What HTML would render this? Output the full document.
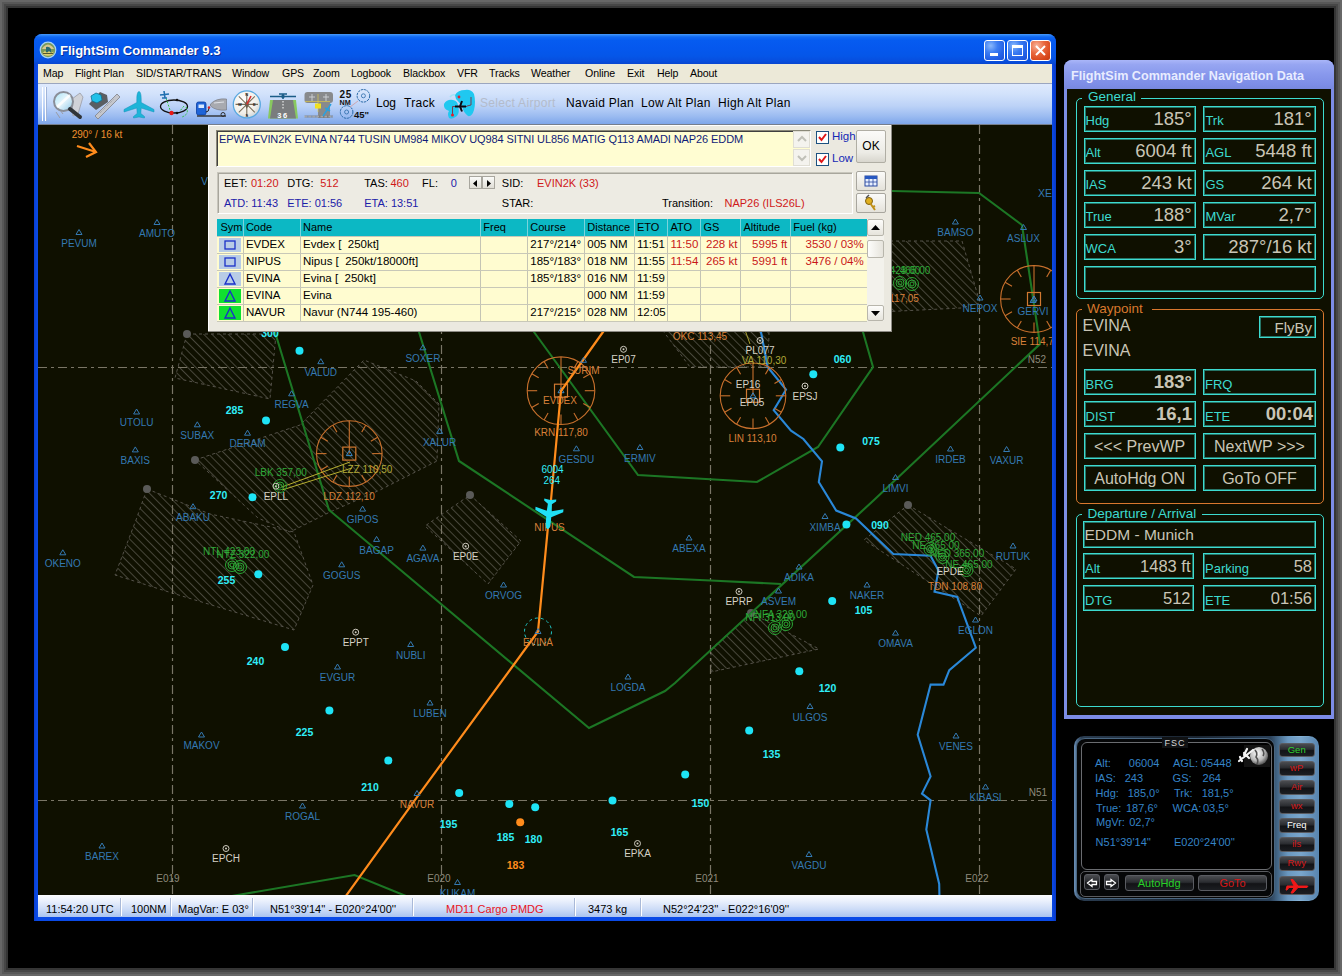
<!DOCTYPE html>
<html><head><meta charset="utf-8">
<style>
*{margin:0;padding:0;box-sizing:border-box}
html,body{width:1342px;height:976px;overflow:hidden;background:#000;font-family:"Liberation Sans",sans-serif}
#frame{position:absolute;left:0;top:0;width:1342px;height:976px;background:#000;box-shadow:inset 0 0 0 2px #676767,inset 0 0 0 4px #585858,inset 0 0 0 6px #474747,inset 0 0 0 8px #353535}
#blk{display:none}
#mw{position:absolute;left:34px;top:34px;width:1022px;height:887px;background:linear-gradient(90deg,#0a3ed0,#0a4ae6 3px,#0a4ae6 1018px,#0838c8);border-radius:8px 8px 0 0}
#mwtitle{position:absolute;left:0;top:0;width:1022px;height:30px;border-radius:8px 8px 0 0;
 background:linear-gradient(#4d9cfa 0px,#3088f8 1px,#1068f2 3px,#065cf0 6px,#0558ee 14px,#0556e8 22px,#074ede 27px,#0846d0 30px)}
#mwtitle .t{position:absolute;left:26px;top:9px;color:#fff;font-weight:bold;font-size:13px;letter-spacing:0px;text-shadow:1px 1px 0 #0b2c94}
.xpb{position:absolute;top:6px;width:21px;height:21px;border:1px solid #fff;border-radius:3px;background:radial-gradient(circle at 30% 25%,#8ab8fb 0%,#3e7ef2 35%,#2360e6 70%,#1d50d4 100%)}
#menubar{position:absolute;left:4px;top:30px;width:1014px;height:20px;background:#ece9d8;border-bottom:1px solid #9ba6bf;font-size:10.6px;letter-spacing:-0.1px;color:#000}
#menubar span{position:absolute;top:3px;white-space:nowrap}
#toolbar{position:absolute;left:4px;top:50px;width:1014px;height:41px;background:linear-gradient(#dfeafd 0%,#d2e2fb 25%,#bcd2f7 55%,#9cbcf1 80%,#7ea6ea 100%);border-bottom:1px solid #767e8c}
#toolbar .tx{position:absolute;top:12px;font-size:12px;color:#000;letter-spacing:0.3px;white-space:nowrap}
#map{position:absolute;left:4px;top:91px;width:1014px;height:770px;background:#0f1000;overflow:hidden}
#status{position:absolute;left:4px;top:861px;width:1014px;height:22px;background:linear-gradient(#fbfcfe 0%,#e8effc 30%,#c8d9f6 70%,#a9c3f0 100%);font-size:11px;color:#000}
#status span{position:absolute;top:7.5px;white-space:nowrap}
.sep{position:absolute;top:3px;width:2px;height:18px;border-left:1px solid #a9b9d8;border-right:1px solid #fff}
#nw{position:absolute;left:1064px;top:60px;width:270px;height:659px;background:#7c8ce6;border-radius:8px 8px 0 0}
#nwtitle{position:absolute;left:0;top:0;width:270px;height:29px;border-radius:8px 8px 0 0;background:linear-gradient(#aab6f8 0%,#97a6f2 15%,#8898ec 50%,#7d8de6 85%,#7888de 100%)}
#nwtitle .t{position:absolute;left:7px;top:9px;color:#e8ecff;font-weight:bold;font-size:12.6px;white-space:nowrap}
#nwbody{position:absolute;left:3px;top:29px;width:264px;height:626px;background:#0f1000}
</style></head><body>
<div id="frame"></div>
<div id="blk"></div>

<div id="mw">
 <div id="mwtitle">
  <svg style="position:absolute;left:5px;top:7px" width="18" height="18" viewBox="0 0 18 18"><circle cx="9" cy="9" r="7.8" fill="#7a9a5a" stroke="#a8d4f4" stroke-width="1.2"/><path d="M3,8 Q5,4 9,3.5 Q13,4 15,8Z" fill="#d8c890"/><path d="M7,6 Q10,5 12,8 L12,11 L7,11Z" fill="#2a6a70"/><path d="M3.5,12 L6,10 L8,12 L10,10 L12,12 L14.5,10.5 L14,13.5 Q9,16 4,13.5Z" fill="#e0d070"/><path d="M4,12.5 L14,12.5" stroke="#303820" stroke-width="0.8"/></svg>
  <div class="t">FlightSim Commander 9.3</div>
  <div class="xpb" style="left:950px"><div style="position:absolute;left:5px;top:12px;width:8px;height:3px;background:#fff"></div></div>
  <div class="xpb" style="left:973px"><div style="position:absolute;left:4px;top:4px;width:11px;height:11px;border:1px solid #fff;border-top-width:3px"></div></div>
  <div class="xpb" style="left:996px;background:radial-gradient(circle at 30% 25%,#f7b39a 0%,#e9683f 40%,#d9481c 75%,#c23a12 100%)">
   <svg style="position:absolute;left:3px;top:3px" width="13" height="13"><path d="M2 2 L11 11 M11 2 L2 11" stroke="#fff" stroke-width="2"/></svg></div>
 </div>
 <div id="menubar">
  <span style="left:5px">Map</span><span style="left:37px">Flight Plan</span><span style="left:98px">SID/STAR/TRANS</span><span style="left:194px">Window</span><span style="left:244px">GPS</span><span style="left:275px">Zoom</span><span style="left:313px">Logbook</span><span style="left:365px">Blackbox</span><span style="left:419px">VFR</span><span style="left:451px">Tracks</span><span style="left:493px">Weather</span><span style="left:547px">Online</span><span style="left:589px">Exit</span><span style="left:619px">Help</span><span style="left:652px">About</span>
 </div>
 <div id="toolbar"><svg style="position:absolute;left:0px;top:0px" width="450" height="41" viewBox="38 84 450 41" font-family="Liberation Sans">
<defs><linearGradient id="gl" x1="0" y1="0" x2="1" y2="1"><stop offset="0" stop-color="#a8e4f8"/><stop offset="0.5" stop-color="#e8f6fc"/><stop offset="1" stop-color="#8cc8e8"/></linearGradient><radialGradient id="cg" cx="0.4" cy="0.35" r="0.7"><stop offset="0" stop-color="#ffffff"/><stop offset="0.7" stop-color="#f0eee8"/><stop offset="1" stop-color="#c8d0d8"/></radialGradient></defs>
<g><path d="M72,99 L80,93 L83,97 L78,114 L73,116Z" fill="#d0d2d8" stroke="#9a9ca4" stroke-width="0.8"/><path d="M56,112 L60,118 M60,110 L63,114" stroke="#9a9ca4" stroke-width="1"/><circle cx="63.5" cy="101.5" r="9.5" fill="url(#gl)" stroke="#8a8e98" stroke-width="2"/><path d="M57,107 L70,95" stroke="#ffffff" stroke-width="2.5" opacity="0.8"/><path d="M70,109 L80,117" stroke="#303438" stroke-width="4" stroke-linecap="round"/></g>
<g><path d="M95,116 L117,94 L120,97 L98,119Z" fill="#c4c6cc" stroke="#808288" stroke-width="0.8"/><path d="M100,113 L114,99" stroke="#808288" stroke-width="0.6" stroke-dasharray="1,1"/><path d="M89,104 L100,92 L107,95 L108,102 L96,110Z" fill="#5a5e62"/><polygon points="96,93 101,95 102,100 97,103 92,101 91,96" fill="#20c0e8" stroke="#107090" stroke-width="0.8"/></g>
<g transform="translate(139,104.5)"><path d="M0,-13 C1.6,-13 2.2,-9 2.2,-6 L2.2,-2 L15,5 L15,7.5 L2.2,3.5 L1.8,9 L5.5,12 L5.5,13.5 L0,12.5 L-5.5,13.5 L-5.5,12 L-1.8,9 L-2.2,3.5 L-15,7.5 L-15,5 L-2.2,-2 L-2.2,-6 C-2.2,-9 -1.6,-13 0,-13Z" fill="#1eb4d8" stroke="#1090b8" stroke-width="0.5"/></g>
<g><ellipse cx="174" cy="106.5" rx="13.5" ry="6.5" fill="none" stroke="#101010" stroke-width="1.3"/><circle cx="171.5" cy="113" r="2.2" fill="#e81818"/><circle cx="177" cy="113" r="1.3" fill="#101010"/><circle cx="177" cy="100" r="1.3" fill="#101010"/><path d="M166,98 L170,110 M184,106 L180,111 M186,107 Q190,114 182,117" fill="none" stroke="#30c040" stroke-width="1" stroke-dasharray="2,1.5"/><path d="M164,91 L165,98 M160,95 L169,94 M162,98 L167,98" stroke="#2070b0" stroke-width="1.6"/></g>
<g><rect x="196.5" y="102" width="9.5" height="13" rx="2" fill="#1f64d8" stroke="#0a3ca0" stroke-width="0.8"/><rect x="198.5" y="104.5" width="5.5" height="3.5" fill="#d8e8ff"/><path d="M206,112 Q209,112 209,108" fill="none" stroke="#202020" stroke-width="1"/><circle cx="209" cy="107.5" r="1.2" fill="#e02020"/><path d="M210.5,104 Q216,98 226.5,99 L226.5,110 Q216,111 210.5,106Z" fill="#a8aab0" stroke="#707278" stroke-width="0.6"/><path d="M214,103 L224,102" stroke="#e0e2e8" stroke-width="1.2"/><path d="M197,116 L226,116" stroke="#303030" stroke-width="1.4"/><circle cx="223" cy="114.5" r="2" fill="none" stroke="#303030" stroke-width="1"/></g>
<g><circle cx="246.8" cy="104.4" r="13.5" fill="url(#cg)" stroke="#58a8e0" stroke-width="1.3"/><path d="M246.8,93 L246.8,116 M235.5,104.4 L258,104.4 M238.8,96.4 L254.8,112.4 M254.8,96.4 L238.8,112.4" stroke="#7a6e5a" stroke-width="1.1"/><path d="M246.8,100 L249,104.4 L246.8,108.8 L244.6,104.4Z" fill="#6a6050"/><path d="M251,96 L246.8,104.4" stroke="#d83030" stroke-width="1.6"/><text x="246.8" y="95.5" font-size="4" text-anchor="middle" fill="#202020" font-weight="bold">N</text><text x="238" y="106" font-size="4" fill="#202020" font-weight="bold">W</text><text x="253" y="106" font-size="4" fill="#202020" font-weight="bold">E</text><text x="245.5" y="117" font-size="4" fill="#202020" font-weight="bold">S</text></g>
<g><path d="M270,100 L296,100 L298,118.5 L268,118.5Z" fill="#88c860"/><path d="M273,100 L293,100 L296,118.5 L270,118.5Z" fill="#7a7c7e"/><path d="M283,101 L283,109" stroke="#fff" stroke-width="1" stroke-dasharray="1.5,1.5"/><text x="283" y="117.5" font-size="7.5" text-anchor="middle" fill="#fff" font-weight="bold" letter-spacing="1.5">36</text><path d="M270,96.5 L296,96.5 M283,94 L283,99 M279,94 L287,94" stroke="#1a5c88" stroke-width="1.5"/><circle cx="283" cy="96.5" r="1.8" fill="#1a5c88"/></g>
<g><rect x="304.5" y="92" width="28.5" height="11" rx="3" fill="#888a8c"/><rect x="318" y="99" width="12" height="19" fill="#888a8c"/><path d="M312,94 L312,101 M309,97 L315,97 M326,94 L326,101 M323,97 L329,97" stroke="#d0d4d8" stroke-width="0.9"/><path d="M318,94 L318,112 M305,101.5 L330,101.5" stroke="#e8d040" stroke-width="0.6"/><rect x="315" y="103.5" width="6" height="5" fill="#f0e020"/><path d="M304.5,116.5 L333,116.5" stroke="#d8dadc" stroke-width="1.3" stroke-dasharray="2.5,1.5"/><path d="M304.5,116.5 L333,116.5" stroke="#707274" stroke-width="2.5" opacity="0.5"/><path d="M323,116 L331,104 M325,108 L330,111" stroke="#28a0e0" stroke-width="1.5"/></g>
<g><text x="339.5" y="97.5" font-size="10" font-weight="bold" fill="#101010" letter-spacing="0.8">25</text><text x="339.5" y="104.5" font-size="7.2" font-weight="bold" fill="#101010">NM</text><text x="354" y="117.5" font-size="9.5" font-weight="bold" fill="#101010">45"</text><circle cx="363.4" cy="95.8" r="6.3" fill="none" stroke="#2a6aa8" stroke-width="1" stroke-dasharray="2.5,0.8"/><circle cx="363.4" cy="95.8" r="2" fill="none" stroke="#2a6aa8" stroke-width="0.8"/><circle cx="346.6" cy="112" r="6.3" fill="none" stroke="#2a6aa8" stroke-width="1" stroke-dasharray="2.5,0.8"/><circle cx="346.6" cy="112" r="2" fill="none" stroke="#2a6aa8" stroke-width="0.8"/><path d="M350,107 L358,101" stroke="#d09090" stroke-width="0.7"/></g>
<g><path d="M444,104 Q447,99 453,100 Q458,101 458,106 Q460,112 457,116 Q452,120 449,118 Q447,114 449,111 Q443,109 444,104Z" fill="#20c8f0"/><path d="M455,95 Q458,90 465,90 Q471,89 474,94 Q476,102 474,110 Q472,117 468,116 Q463,112 462,106 Q458,101 456,99Z" fill="#20c8f0"/><path d="M450,97 Q452,94 455,95" stroke="#a0e4f8" stroke-width="1.5" fill="none"/><path d="M452.5,115 L452.5,106.5 L467,106.5 M471,97 L471,105 L467,106" fill="none" stroke="#803040" stroke-width="0.9"/><circle cx="452.5" cy="115" r="1.5" fill="#e02030"/><circle cx="459" cy="97" r="1.4" fill="#e02030"/><path d="M455,106.5 L466,106.5 M462,101 L460,106.5 L462,111.5" stroke="#0a0a10" stroke-width="2" fill="none"/></g>
</svg>
  <div style="position:absolute;left:4px;top:3px;width:4px;height:34px;border-left:1px solid #fff;border-right:1px solid #fff;box-shadow:1px 0 0 #a0b4d8"></div>
  <span class="tx" style="left:338px;letter-spacing:0">Log</span>
  <span class="tx" style="left:366px">Track</span>
  <span class="tx" style="left:442px;color:#b4bccb">Select Airport</span>
  <span class="tx" style="left:528px">Navaid Plan</span>
  <span class="tx" style="left:603px">Low Alt Plan</span>
  <span class="tx" style="left:680px">High Alt Plan</span>
 </div>
 <div id="map"><svg style="position:absolute;left:0;top:0" width="1014" height="770" viewBox="38 125 1014 770" font-family="Liberation Sans">
<defs><pattern id="hp" patternUnits="userSpaceOnUse" width="5.8" height="5.8" patternTransform="rotate(-45)"><line x1="0.5" y1="0" x2="0.5" y2="5.8" stroke="#4e4c42" stroke-width="0.9"/></pattern></defs>
<rect x="38" y="125" width="1014" height="770" fill="#0f1000"/>
<polygon points="187.0,334.0 276.0,334.0 270.0,399.0 175.0,378.0" fill="url(#hp)" stroke="#55524a" stroke-width="1" stroke-dasharray="3,3"/>
<polygon points="195.0,460.0 300.0,425.0 364.0,360.0 416.0,381.0 439.0,404.0 437.0,461.0 380.0,490.0 330.0,512.0 290.0,532.0 258.0,518.0" fill="url(#hp)" stroke="#55524a" stroke-width="1" stroke-dasharray="3,3"/>
<polygon points="147.0,489.0 210.0,514.0 294.0,532.0 313.0,585.0 294.0,630.0 172.0,593.0 115.0,575.0 136.0,520.0" fill="url(#hp)" stroke="#55524a" stroke-width="1" stroke-dasharray="3,3"/>
<polygon points="470.0,495.0 521.0,541.0 488.0,584.0 425.0,526.0" fill="url(#hp)" stroke="#55524a" stroke-width="1" stroke-dasharray="3,3"/>
<polygon points="908.0,505.0 1016.0,569.0 981.0,616.0 864.0,540.0" fill="url(#hp)" stroke="#55524a" stroke-width="1" stroke-dasharray="3,3"/>
<polygon points="751.0,613.0 819.0,649.0 711.0,672.0 711.0,649.0" fill="url(#hp)" stroke="#55524a" stroke-width="1" stroke-dasharray="3,3"/>
<polygon points="860.0,241.0 962.0,241.0 980.0,303.0 961.0,308.0 860.0,313.0" fill="url(#hp)" stroke="#55524a" stroke-width="1" stroke-dasharray="3,3"/>
<polygon points="640.0,300.0 770.0,300.0 768.0,367.0 690.0,367.0" fill="url(#hp)" stroke="#55524a" stroke-width="1" stroke-dasharray="3,3"/>
<line x1="172.5" y1="125" x2="172.5" y2="895" stroke="#7a7666" stroke-width="1.2" stroke-dasharray="9,4,3,4"/>
<line x1="441.5" y1="125" x2="441.5" y2="895" stroke="#7a7666" stroke-width="1.2" stroke-dasharray="9,4,3,4"/>
<line x1="710.5" y1="125" x2="710.5" y2="895" stroke="#7a7666" stroke-width="1.2" stroke-dasharray="9,4,3,4"/>
<line x1="979.5" y1="125" x2="979.5" y2="895" stroke="#7a7666" stroke-width="1.2" stroke-dasharray="9,4,3,4"/>
<line x1="38" y1="367.5" x2="1052" y2="367.5" stroke="#7a7666" stroke-width="1.2" stroke-dasharray="9,4,3,4"/>
<line x1="38" y1="800.5" x2="1052" y2="800.5" stroke="#7a7666" stroke-width="1.2" stroke-dasharray="9,4,3,4"/>
<text x="168.0" y="882.1" fill="#8e8a7c" font-size="10" font-weight="normal" text-anchor="middle" >E019</text>
<text x="439.0" y="882.1" fill="#8e8a7c" font-size="10" font-weight="normal" text-anchor="middle" >E020</text>
<text x="707.0" y="882.1" fill="#8e8a7c" font-size="10" font-weight="normal" text-anchor="middle" >E021</text>
<text x="977.0" y="882.1" fill="#8e8a7c" font-size="10" font-weight="normal" text-anchor="middle" >E022</text>
<text x="1037.0" y="363.1" fill="#8e8a7c" font-size="10" font-weight="normal" text-anchor="middle" >N52</text>
<text x="1038.0" y="796.1" fill="#8e8a7c" font-size="10" font-weight="normal" text-anchor="middle" >N51</text>
<circle cx="187" cy="334" r="4" fill="#5a5a58"/>
<circle cx="195" cy="460" r="4" fill="#5a5a58"/>
<circle cx="147" cy="489" r="4" fill="#5a5a58"/>
<circle cx="470" cy="495" r="4" fill="#5a5a58"/>
<circle cx="908" cy="505" r="4" fill="#5a5a58"/>
<circle cx="751" cy="613" r="4" fill="#5a5a58"/>
<polyline points="892.0,191.0 979.0,193.0 1022.0,225.0 1040.0,344.0 874.0,500.0 675.0,683.0 665.0,691.0 589.0,728.0 329.0,510.0 275.0,332.0 262.0,290.0" fill="none" stroke="#1c7624" stroke-width="2.1"/>
<polyline points="405.0,290.0 419.0,332.0 459.0,461.0 634.0,577.0 710.7,580.5 781.0,584.0" fill="none" stroke="#1c7624" stroke-width="2.1"/>
<polyline points="505.0,290.0 534.0,332.0 638.0,475.0 757.0,482.0 818.0,447.0 873.0,367.0 863.0,332.0 850.0,300.0" fill="none" stroke="#1c7624" stroke-width="2.1"/>
<polyline points="232.0,896.0 354.5,875.0 406.0,896.0" fill="none" stroke="#1c7624" stroke-width="2.1"/>
<polyline points="755.0,300.0 761.0,332.0 767.6,367.0 786.0,389.7 773.7,410.2 791.0,430.7 803.4,439.0 822.0,461.4 818.8,482.0 836.2,510.6 856.0,518.5 893.3,554.0 930.5,555.8 938.5,570.4 934.5,591.7 957.2,597.0 975.8,647.7 949.3,670.2 943.5,684.6 930.6,684.6 917.7,734.8 930.6,776.4 922.0,793.6 930.6,800.3 926.3,829.5 939.2,884.0 939.5,900.0" fill="none" stroke="#2a88d8" stroke-width="2.1"/>
<circle cx="349.3" cy="453.6" r="32.8" fill="none" stroke="#c8702c" stroke-width="1.1"/>
<line x1="349.3" y1="420.8" x2="349.3" y2="453.6" stroke="#c8702c" stroke-width="1.1"/>
<line x1="365.7" y1="425.2" x2="361.7" y2="432.1" stroke="#c8702c" stroke-width="1.1"/>
<line x1="377.7" y1="437.2" x2="370.8" y2="441.2" stroke="#c8702c" stroke-width="1.1"/>
<line x1="382.1" y1="453.6" x2="372.1" y2="453.6" stroke="#c8702c" stroke-width="1.1"/>
<line x1="377.7" y1="470.0" x2="370.8" y2="466.0" stroke="#c8702c" stroke-width="1.1"/>
<line x1="365.7" y1="482.0" x2="361.7" y2="475.1" stroke="#c8702c" stroke-width="1.1"/>
<line x1="349.3" y1="486.4" x2="349.3" y2="476.4" stroke="#c8702c" stroke-width="1.1"/>
<line x1="332.9" y1="482.0" x2="336.9" y2="475.1" stroke="#c8702c" stroke-width="1.1"/>
<line x1="320.9" y1="470.0" x2="327.8" y2="466.0" stroke="#c8702c" stroke-width="1.1"/>
<line x1="316.5" y1="453.6" x2="326.5" y2="453.6" stroke="#c8702c" stroke-width="1.1"/>
<line x1="320.9" y1="437.2" x2="327.8" y2="441.2" stroke="#c8702c" stroke-width="1.1"/>
<line x1="332.9" y1="425.2" x2="336.9" y2="432.1" stroke="#c8702c" stroke-width="1.1"/>
<rect x="342.8" y="447.1" width="13" height="13" fill="none" stroke="#d07830" stroke-width="1.2"/>
<path d="M346.3,455.6 L349.3,450.6 L352.3,455.6Z" fill="none" stroke="#3a88c8" stroke-width="1"/>
<circle cx="561" cy="390.7" r="33.8" fill="none" stroke="#c8702c" stroke-width="1.1"/>
<line x1="561.0" y1="356.9" x2="561.0" y2="390.7" stroke="#c8702c" stroke-width="1.1"/>
<line x1="577.9" y1="361.4" x2="573.9" y2="368.4" stroke="#c8702c" stroke-width="1.1"/>
<line x1="590.3" y1="373.8" x2="583.3" y2="377.8" stroke="#c8702c" stroke-width="1.1"/>
<line x1="594.8" y1="390.7" x2="584.8" y2="390.7" stroke="#c8702c" stroke-width="1.1"/>
<line x1="590.3" y1="407.6" x2="583.3" y2="403.6" stroke="#c8702c" stroke-width="1.1"/>
<line x1="577.9" y1="420.0" x2="573.9" y2="413.0" stroke="#c8702c" stroke-width="1.1"/>
<line x1="561.0" y1="424.5" x2="561.0" y2="414.5" stroke="#c8702c" stroke-width="1.1"/>
<line x1="544.1" y1="420.0" x2="548.1" y2="413.0" stroke="#c8702c" stroke-width="1.1"/>
<line x1="531.7" y1="407.6" x2="538.7" y2="403.6" stroke="#c8702c" stroke-width="1.1"/>
<line x1="527.2" y1="390.7" x2="537.2" y2="390.7" stroke="#c8702c" stroke-width="1.1"/>
<line x1="531.7" y1="373.8" x2="538.7" y2="377.8" stroke="#c8702c" stroke-width="1.1"/>
<line x1="544.1" y1="361.4" x2="548.1" y2="368.4" stroke="#c8702c" stroke-width="1.1"/>
<rect x="554.5" y="384.2" width="13" height="13" fill="none" stroke="#d07830" stroke-width="1.2"/>
<path d="M558,392.7 L561,387.7 L564,392.7Z" fill="none" stroke="#3a88c8" stroke-width="1"/>
<circle cx="753" cy="395.8" r="32.8" fill="none" stroke="#c8702c" stroke-width="1.1"/>
<line x1="753.0" y1="363.0" x2="753.0" y2="395.8" stroke="#c8702c" stroke-width="1.1"/>
<line x1="769.4" y1="367.4" x2="765.4" y2="374.3" stroke="#c8702c" stroke-width="1.1"/>
<line x1="781.4" y1="379.4" x2="774.5" y2="383.4" stroke="#c8702c" stroke-width="1.1"/>
<line x1="785.8" y1="395.8" x2="775.8" y2="395.8" stroke="#c8702c" stroke-width="1.1"/>
<line x1="781.4" y1="412.2" x2="774.5" y2="408.2" stroke="#c8702c" stroke-width="1.1"/>
<line x1="769.4" y1="424.2" x2="765.4" y2="417.3" stroke="#c8702c" stroke-width="1.1"/>
<line x1="753.0" y1="428.6" x2="753.0" y2="418.6" stroke="#c8702c" stroke-width="1.1"/>
<line x1="736.6" y1="424.2" x2="740.6" y2="417.3" stroke="#c8702c" stroke-width="1.1"/>
<line x1="724.6" y1="412.2" x2="731.5" y2="408.2" stroke="#c8702c" stroke-width="1.1"/>
<line x1="720.2" y1="395.8" x2="730.2" y2="395.8" stroke="#c8702c" stroke-width="1.1"/>
<line x1="724.6" y1="379.4" x2="731.5" y2="383.4" stroke="#c8702c" stroke-width="1.1"/>
<line x1="736.6" y1="367.4" x2="740.6" y2="374.3" stroke="#c8702c" stroke-width="1.1"/>
<rect x="746.5" y="389.3" width="13" height="13" fill="none" stroke="#d07830" stroke-width="1.2"/>
<path d="M750,397.8 L753,392.8 L756,397.8Z" fill="none" stroke="#3a88c8" stroke-width="1"/>
<circle cx="1034" cy="299" r="33.4" fill="none" stroke="#c8702c" stroke-width="1.1"/>
<line x1="1034.0" y1="265.6" x2="1034.0" y2="299.0" stroke="#c8702c" stroke-width="1.1"/>
<line x1="1050.7" y1="270.1" x2="1046.7" y2="277.0" stroke="#c8702c" stroke-width="1.1"/>
<line x1="1062.9" y1="282.3" x2="1056.0" y2="286.3" stroke="#c8702c" stroke-width="1.1"/>
<line x1="1067.4" y1="299.0" x2="1057.4" y2="299.0" stroke="#c8702c" stroke-width="1.1"/>
<line x1="1062.9" y1="315.7" x2="1056.0" y2="311.7" stroke="#c8702c" stroke-width="1.1"/>
<line x1="1050.7" y1="327.9" x2="1046.7" y2="321.0" stroke="#c8702c" stroke-width="1.1"/>
<line x1="1034.0" y1="332.4" x2="1034.0" y2="322.4" stroke="#c8702c" stroke-width="1.1"/>
<line x1="1017.3" y1="327.9" x2="1021.3" y2="321.0" stroke="#c8702c" stroke-width="1.1"/>
<line x1="1005.1" y1="315.7" x2="1012.0" y2="311.7" stroke="#c8702c" stroke-width="1.1"/>
<line x1="1000.6" y1="299.0" x2="1010.6" y2="299.0" stroke="#c8702c" stroke-width="1.1"/>
<line x1="1005.1" y1="282.3" x2="1012.0" y2="286.3" stroke="#c8702c" stroke-width="1.1"/>
<line x1="1017.3" y1="270.1" x2="1021.3" y2="277.0" stroke="#c8702c" stroke-width="1.1"/>
<rect x="1027.5" y="292.5" width="13" height="13" fill="none" stroke="#d07830" stroke-width="1.2"/>
<path d="M1031,301 L1034,296 L1037,301Z" fill="none" stroke="#3a88c8" stroke-width="1"/>
<polyline points="282,487 350,462" stroke="#b8b030" stroke-width="1" fill="none"/><polyline points="282,490 352,468" stroke="#b8b030" stroke-width="1" fill="none"/>
<polyline points="750,344 745,330" stroke="#a8a030" stroke-width="1" fill="none"/>
<polyline points="343.0,900.0 417.6,796.4 538.0,631.5 547.7,529.6 551.0,500.0 561.0,391.0 603.0,332.0 640.0,280.0" fill="none" stroke="#ff8c1c" stroke-width="2.2"/>
<circle cx="538" cy="631.5" r="13.5" fill="none" stroke="#20c8c8" stroke-width="1" stroke-dasharray="3,3"/>
<circle cx="280" cy="486" r="2" fill="none" stroke="#2aa634" stroke-width="1"/>
<circle cx="280" cy="486" r="4" fill="none" stroke="#2aa634" stroke-width="1"/>
<circle cx="280" cy="486" r="6.5" fill="none" stroke="#2aa634" stroke-width="1"/>
<circle cx="232" cy="565" r="2" fill="none" stroke="#2aa634" stroke-width="1"/>
<circle cx="232" cy="565" r="4" fill="none" stroke="#2aa634" stroke-width="1"/>
<circle cx="232" cy="565" r="6.5" fill="none" stroke="#2aa634" stroke-width="1"/>
<circle cx="240" cy="567" r="2" fill="none" stroke="#2aa634" stroke-width="1"/>
<circle cx="240" cy="567" r="4" fill="none" stroke="#2aa634" stroke-width="1"/>
<circle cx="240" cy="567" r="6.5" fill="none" stroke="#2aa634" stroke-width="1"/>
<circle cx="930.5" cy="549" r="2" fill="none" stroke="#2aa634" stroke-width="1"/>
<circle cx="930.5" cy="549" r="4" fill="none" stroke="#2aa634" stroke-width="1"/>
<circle cx="930.5" cy="549" r="6.5" fill="none" stroke="#2aa634" stroke-width="1"/>
<circle cx="942.5" cy="557" r="2" fill="none" stroke="#2aa634" stroke-width="1"/>
<circle cx="942.5" cy="557" r="4" fill="none" stroke="#2aa634" stroke-width="1"/>
<circle cx="942.5" cy="557" r="6.5" fill="none" stroke="#2aa634" stroke-width="1"/>
<circle cx="966.5" cy="570" r="2" fill="none" stroke="#2aa634" stroke-width="1"/>
<circle cx="966.5" cy="570" r="4" fill="none" stroke="#2aa634" stroke-width="1"/>
<circle cx="966.5" cy="570" r="6.5" fill="none" stroke="#2aa634" stroke-width="1"/>
<circle cx="775" cy="628" r="2" fill="none" stroke="#2aa634" stroke-width="1"/>
<circle cx="775" cy="628" r="4" fill="none" stroke="#2aa634" stroke-width="1"/>
<circle cx="775" cy="628" r="6.5" fill="none" stroke="#2aa634" stroke-width="1"/>
<circle cx="786" cy="624" r="2" fill="none" stroke="#2aa634" stroke-width="1"/>
<circle cx="786" cy="624" r="4" fill="none" stroke="#2aa634" stroke-width="1"/>
<circle cx="786" cy="624" r="6.5" fill="none" stroke="#2aa634" stroke-width="1"/>
<circle cx="900" cy="283" r="2" fill="none" stroke="#2aa634" stroke-width="1"/>
<circle cx="900" cy="283" r="4" fill="none" stroke="#2aa634" stroke-width="1"/>
<circle cx="900" cy="283" r="6.5" fill="none" stroke="#2aa634" stroke-width="1"/>
<circle cx="912" cy="284" r="2" fill="none" stroke="#2aa634" stroke-width="1"/>
<circle cx="912" cy="284" r="4" fill="none" stroke="#2aa634" stroke-width="1"/>
<circle cx="912" cy="284" r="6.5" fill="none" stroke="#2aa634" stroke-width="1"/>
<path d="M76,234.5 L79,229.5 L82,234.5Z" fill="none" stroke="#3479b2" stroke-width="1"/>
<text x="79.0" y="246.6" fill="#3479b2" font-size="10" font-weight="normal" text-anchor="middle" >PEVUM</text>
<path d="M154,224.5 L157,219.5 L160,224.5Z" fill="none" stroke="#3479b2" stroke-width="1"/>
<text x="157.0" y="236.6" fill="#3479b2" font-size="10" font-weight="normal" text-anchor="middle" >AMUTO</text>
<path d="M133.6,414.0 L136.6,409.0 L139.6,414.0Z" fill="none" stroke="#3479b2" stroke-width="1"/>
<text x="136.6" y="426.1" fill="#3479b2" font-size="10" font-weight="normal" text-anchor="middle" >UTOLU</text>
<path d="M132.3,451.9 L135.3,446.9 L138.3,451.9Z" fill="none" stroke="#3479b2" stroke-width="1"/>
<text x="135.3" y="464.0" fill="#3479b2" font-size="10" font-weight="normal" text-anchor="middle" >BAXIS</text>
<path d="M194.3,426.8 L197.3,421.8 L200.3,426.8Z" fill="none" stroke="#3479b2" stroke-width="1"/>
<text x="197.3" y="438.9" fill="#3479b2" font-size="10" font-weight="normal" text-anchor="middle" >SUBAX</text>
<path d="M244.5,435.2 L247.5,430.2 L250.5,435.2Z" fill="none" stroke="#3479b2" stroke-width="1"/>
<text x="247.5" y="447.3" fill="#3479b2" font-size="10" font-weight="normal" text-anchor="middle" >DERAM</text>
<path d="M190,508.70000000000005 L193,503.70000000000005 L196,508.70000000000005Z" fill="none" stroke="#3479b2" stroke-width="1"/>
<text x="193.0" y="520.8" fill="#3479b2" font-size="10" font-weight="normal" text-anchor="middle" >ABAKU</text>
<path d="M59.8,554.8 L62.8,549.8 L65.8,554.8Z" fill="none" stroke="#3479b2" stroke-width="1"/>
<text x="62.8" y="566.9" fill="#3479b2" font-size="10" font-weight="normal" text-anchor="middle" >OKENO</text>
<path d="M288.6,395.8 L291.6,390.8 L294.6,395.8Z" fill="none" stroke="#3479b2" stroke-width="1"/>
<text x="291.6" y="407.9" fill="#3479b2" font-size="10" font-weight="normal" text-anchor="middle" >REGVA</text>
<path d="M317.8,363.7 L320.8,358.7 L323.8,363.7Z" fill="none" stroke="#3479b2" stroke-width="1"/>
<text x="320.8" y="375.8" fill="#3479b2" font-size="10" font-weight="normal" text-anchor="middle" >VALUD</text>
<path d="M419.9,349.8 L422.9,344.8 L425.9,349.8Z" fill="none" stroke="#3479b2" stroke-width="1"/>
<text x="422.9" y="361.9" fill="#3479b2" font-size="10" font-weight="normal" text-anchor="middle" >SOXER</text>
<path d="M436.6,433.4 L439.6,428.4 L442.6,433.4Z" fill="none" stroke="#3479b2" stroke-width="1"/>
<text x="439.6" y="445.5" fill="#3479b2" font-size="10" font-weight="normal" text-anchor="middle" >XALUR</text>
<path d="M359.6,511.1 L362.6,506.1 L365.6,511.1Z" fill="none" stroke="#3479b2" stroke-width="1"/>
<text x="362.6" y="523.2" fill="#3479b2" font-size="10" font-weight="normal" text-anchor="middle" >GIPOS</text>
<path d="M373.6,541.4 L376.6,536.4 L379.6,541.4Z" fill="none" stroke="#3479b2" stroke-width="1"/>
<text x="376.6" y="553.5" fill="#3479b2" font-size="10" font-weight="normal" text-anchor="middle" >BAGAP</text>
<path d="M419.9,550.1 L422.9,545.1 L425.9,550.1Z" fill="none" stroke="#3479b2" stroke-width="1"/>
<text x="422.9" y="562.2" fill="#3479b2" font-size="10" font-weight="normal" text-anchor="middle" >AGAVA</text>
<path d="M338.7,566.8 L341.7,561.8 L344.7,566.8Z" fill="none" stroke="#3479b2" stroke-width="1"/>
<text x="341.7" y="578.9" fill="#3479b2" font-size="10" font-weight="normal" text-anchor="middle" >GOGUS</text>
<path d="M407.7,646.5 L410.7,641.5 L413.7,646.5Z" fill="none" stroke="#3479b2" stroke-width="1"/>
<text x="410.7" y="658.6" fill="#3479b2" font-size="10" font-weight="normal" text-anchor="middle" >NUBLI</text>
<path d="M573.4,450.8 L576.4,445.8 L579.4,450.8Z" fill="none" stroke="#3479b2" stroke-width="1"/>
<text x="576.4" y="462.9" fill="#3479b2" font-size="10" font-weight="normal" text-anchor="middle" >GESDU</text>
<path d="M636.9,449.5 L639.9,444.5 L642.9,449.5Z" fill="none" stroke="#3479b2" stroke-width="1"/>
<text x="639.9" y="461.6" fill="#3479b2" font-size="10" font-weight="normal" text-anchor="middle" >ERMIV</text>
<path d="M952.4,224.0 L955.4,219.0 L958.4,224.0Z" fill="none" stroke="#3479b2" stroke-width="1"/>
<text x="955.4" y="236.1" fill="#3479b2" font-size="10" font-weight="normal" text-anchor="middle" >BAMSO</text>
<path d="M1020.5,229.5 L1023.5,224.5 L1026.5,229.5Z" fill="none" stroke="#3479b2" stroke-width="1"/>
<text x="1023.5" y="241.6" fill="#3479b2" font-size="10" font-weight="normal" text-anchor="middle" >ASLUX</text>
<path d="M977,300.0 L980,295.0 L983,300.0Z" fill="none" stroke="#3479b2" stroke-width="1"/>
<text x="980.0" y="312.1" fill="#3479b2" font-size="10" font-weight="normal" text-anchor="middle" >NEPOX</text>
<path d="M1030,302.5 L1033,297.5 L1036,302.5Z" fill="none" stroke="#3479b2" stroke-width="1"/>
<text x="1033.0" y="314.6" fill="#3479b2" font-size="10" font-weight="normal" text-anchor="middle" >GERVI</text>
<path d="M892.5,479.5 L895.5,474.5 L898.5,479.5Z" fill="none" stroke="#3479b2" stroke-width="1"/>
<text x="895.5" y="491.6" fill="#3479b2" font-size="10" font-weight="normal" text-anchor="middle" >LIMVI</text>
<path d="M947.5,451.0 L950.5,446.0 L953.5,451.0Z" fill="none" stroke="#3479b2" stroke-width="1"/>
<text x="950.5" y="463.1" fill="#3479b2" font-size="10" font-weight="normal" text-anchor="middle" >IRDEB</text>
<path d="M1003.6,451.5 L1006.6,446.5 L1009.6,451.5Z" fill="none" stroke="#3479b2" stroke-width="1"/>
<text x="1006.6" y="463.6" fill="#3479b2" font-size="10" font-weight="normal" text-anchor="middle" >VAXUR</text>
<path d="M1010,548.0 L1013,543.0 L1016,548.0Z" fill="none" stroke="#3479b2" stroke-width="1"/>
<text x="1013.0" y="560.1" fill="#3479b2" font-size="10" font-weight="normal" text-anchor="middle" >RUTUK</text>
<path d="M864,587.0 L867,582.0 L870,587.0Z" fill="none" stroke="#3479b2" stroke-width="1"/>
<text x="867.0" y="599.1" fill="#3479b2" font-size="10" font-weight="normal" text-anchor="middle" >NAKER</text>
<path d="M892.5,635.1 L895.5,630.1 L898.5,635.1Z" fill="none" stroke="#3479b2" stroke-width="1"/>
<text x="895.5" y="647.2" fill="#3479b2" font-size="10" font-weight="normal" text-anchor="middle" >OMAVA</text>
<path d="M972.5,622.0 L975.5,617.0 L978.5,622.0Z" fill="none" stroke="#3479b2" stroke-width="1"/>
<text x="975.5" y="634.1" fill="#3479b2" font-size="10" font-weight="normal" text-anchor="middle" >EGLON</text>
<path d="M822,518.5 L825,513.5 L828,518.5Z" fill="none" stroke="#3479b2" stroke-width="1"/>
<text x="825.0" y="530.6" fill="#3479b2" font-size="10" font-weight="normal" text-anchor="middle" >XIMBA</text>
<path d="M686,540.0 L689,535.0 L692,540.0Z" fill="none" stroke="#3479b2" stroke-width="1"/>
<text x="689.0" y="552.1" fill="#3479b2" font-size="10" font-weight="normal" text-anchor="middle" >ABEXA</text>
<path d="M796,569.0 L799,564.0 L802,569.0Z" fill="none" stroke="#3479b2" stroke-width="1"/>
<text x="799.0" y="581.1" fill="#3479b2" font-size="10" font-weight="normal" text-anchor="middle" >ADIKA</text>
<path d="M775.5,593.0 L778.5,588.0 L781.5,593.0Z" fill="none" stroke="#3479b2" stroke-width="1"/>
<text x="778.5" y="605.1" fill="#3479b2" font-size="10" font-weight="normal" text-anchor="middle" >ASVEM</text>
<path d="M500.5,587.0 L503.5,582.0 L506.5,587.0Z" fill="none" stroke="#3479b2" stroke-width="1"/>
<text x="503.5" y="599.1" fill="#3479b2" font-size="10" font-weight="normal" text-anchor="middle" >ORVOG</text>
<path d="M625,679.0 L628,674.0 L631,679.0Z" fill="none" stroke="#3479b2" stroke-width="1"/>
<text x="628.0" y="691.1" fill="#3479b2" font-size="10" font-weight="normal" text-anchor="middle" >LOGDA</text>
<path d="M334.5,669.0 L337.5,664.0 L340.5,669.0Z" fill="none" stroke="#3479b2" stroke-width="1"/>
<text x="337.5" y="681.1" fill="#3479b2" font-size="10" font-weight="normal" text-anchor="middle" >EVGUR</text>
<path d="M427,705.0 L430,700.0 L433,705.0Z" fill="none" stroke="#3479b2" stroke-width="1"/>
<text x="430.0" y="717.1" fill="#3479b2" font-size="10" font-weight="normal" text-anchor="middle" >LUBEN</text>
<path d="M454.5,884.5 L457.5,879.5 L460.5,884.5Z" fill="none" stroke="#3479b2" stroke-width="1"/>
<text x="457.5" y="896.6" fill="#3479b2" font-size="10" font-weight="normal" text-anchor="middle" >KUKAM</text>
<path d="M198.5,737.0 L201.5,732.0 L204.5,737.0Z" fill="none" stroke="#3479b2" stroke-width="1"/>
<text x="201.5" y="749.1" fill="#3479b2" font-size="10" font-weight="normal" text-anchor="middle" >MAKOV</text>
<path d="M299.5,808.0 L302.5,803.0 L305.5,808.0Z" fill="none" stroke="#3479b2" stroke-width="1"/>
<text x="302.5" y="820.1" fill="#3479b2" font-size="10" font-weight="normal" text-anchor="middle" >ROGAL</text>
<path d="M99,848.0 L102,843.0 L105,848.0Z" fill="none" stroke="#3479b2" stroke-width="1"/>
<text x="102.0" y="860.1" fill="#3479b2" font-size="10" font-weight="normal" text-anchor="middle" >BAREX</text>
<path d="M807,708.5 L810,703.5 L813,708.5Z" fill="none" stroke="#3479b2" stroke-width="1"/>
<text x="810.0" y="720.6" fill="#3479b2" font-size="10" font-weight="normal" text-anchor="middle" >ULGOS</text>
<path d="M806,856.5 L809,851.5 L812,856.5Z" fill="none" stroke="#3479b2" stroke-width="1"/>
<text x="809.0" y="868.6" fill="#3479b2" font-size="10" font-weight="normal" text-anchor="middle" >VAGDU</text>
<path d="M953,738.0 L956,733.0 L959,738.0Z" fill="none" stroke="#3479b2" stroke-width="1"/>
<text x="956.0" y="750.1" fill="#3479b2" font-size="10" font-weight="normal" text-anchor="middle" >VENES</text>
<path d="M982.5,789.0 L985.5,784.0 L988.5,789.0Z" fill="none" stroke="#3479b2" stroke-width="1"/>
<text x="985.5" y="801.1" fill="#3479b2" font-size="10" font-weight="normal" text-anchor="middle" >KIBASI</text>
<circle cx="623.5" cy="349.3" r="3" fill="none" stroke="#d0ccc0" stroke-width="1"/><circle cx="623.5" cy="349.3" r="1" fill="#d0ccc0"/>
<text x="623.5" y="362.9" fill="#d6d2c6" font-size="10" font-weight="normal" text-anchor="middle" >EP07</text>
<circle cx="805" cy="386" r="3" fill="none" stroke="#d0ccc0" stroke-width="1"/><circle cx="805" cy="386" r="1" fill="#d0ccc0"/>
<text x="805.0" y="399.6" fill="#d6d2c6" font-size="10" font-weight="normal" text-anchor="middle" >EPSJ</text>
<circle cx="739" cy="591.5" r="3" fill="none" stroke="#d0ccc0" stroke-width="1"/><circle cx="739" cy="591.5" r="1" fill="#d0ccc0"/>
<text x="739.0" y="605.1" fill="#d6d2c6" font-size="10" font-weight="normal" text-anchor="middle" >EPRP</text>
<circle cx="465.7" cy="546.2" r="3" fill="none" stroke="#d0ccc0" stroke-width="1"/><circle cx="465.7" cy="546.2" r="1" fill="#d0ccc0"/>
<text x="465.7" y="559.8" fill="#d6d2c6" font-size="10" font-weight="normal" text-anchor="middle" >EP0E</text>
<circle cx="355.7" cy="632.2" r="3" fill="none" stroke="#d0ccc0" stroke-width="1"/><circle cx="355.7" cy="632.2" r="1" fill="#d0ccc0"/>
<text x="355.7" y="645.8" fill="#d6d2c6" font-size="10" font-weight="normal" text-anchor="middle" >EPPT</text>
<circle cx="226" cy="848.5" r="3" fill="none" stroke="#d0ccc0" stroke-width="1"/><circle cx="226" cy="848.5" r="1" fill="#d0ccc0"/>
<text x="226.0" y="862.1" fill="#d6d2c6" font-size="10" font-weight="normal" text-anchor="middle" >EPCH</text>
<circle cx="637.5" cy="843.5" r="3" fill="none" stroke="#d0ccc0" stroke-width="1"/><circle cx="637.5" cy="843.5" r="1" fill="#d0ccc0"/>
<text x="637.5" y="857.1" fill="#d6d2c6" font-size="10" font-weight="normal" text-anchor="middle" >EPKA</text>
<circle cx="275.9" cy="486.2" r="3" fill="none" stroke="#d0ccc0" stroke-width="1"/><circle cx="275.9" cy="486.2" r="1" fill="#d0ccc0"/>
<text x="275.9" y="499.8" fill="#d6d2c6" font-size="10" font-weight="normal" text-anchor="middle" >EPLL</text>
<circle cx="760" cy="340.5" r="3" fill="none" stroke="#d0ccc0" stroke-width="1"/><circle cx="760" cy="340.5" r="1" fill="#d0ccc0"/>
<text x="760.0" y="354.1" fill="#d6d2c6" font-size="10" font-weight="normal" text-anchor="middle" >PL077</text>
<text x="748.0" y="388.2" fill="#d6d2c6" font-size="10" font-weight="normal" text-anchor="middle" >EP16</text>
<text x="752.0" y="406.1" fill="#d6d2c6" font-size="10" font-weight="normal" text-anchor="middle" >EP05</text>
<text x="950.0" y="574.6" fill="#d6d2c6" font-size="10" font-weight="normal" text-anchor="middle" >EPDE</text>
<path d="M414,795.5 L417,790.5 L420,795.5Z" fill="none" stroke="#3479b2" stroke-width="1"/>
<path d="M535,633.5 L538,628.5 L541,633.5Z" fill="none" stroke="#3479b2" stroke-width="1"/>
<path d="M580.5,362.3 L583.5,357.3 L586.5,362.3Z" fill="none" stroke="#3479b2" stroke-width="1"/>
<text x="583.5" y="374.4" fill="#d8803a" font-size="10" font-weight="normal" text-anchor="middle" >SURIM</text>
<text x="560.0" y="404.1" fill="#d8803a" font-size="10" font-weight="normal" text-anchor="middle" >EVDEX</text>
<text x="561.0" y="435.9" fill="#d8803a" font-size="10" font-weight="normal" text-anchor="middle" >KRN 117,80</text>
<text x="700.0" y="339.6" fill="#d8803a" font-size="10" font-weight="normal" text-anchor="middle" >OKC 113,45</text>
<text x="752.5" y="441.6" fill="#d8803a" font-size="10" font-weight="normal" text-anchor="middle" >LIN 113,10</text>
<text x="1035.0" y="345.1" fill="#d8803a" font-size="10" font-weight="normal" text-anchor="middle" >SIE 114,70</text>
<text x="349.0" y="499.5" fill="#d8803a" font-size="10" font-weight="normal" text-anchor="middle" >LDZ 112,10</text>
<text x="955.0" y="589.6" fill="#d8803a" font-size="10" font-weight="normal" text-anchor="middle" >TDN 108,80</text>
<text x="549.5" y="531.1" fill="#d8803a" font-size="10" font-weight="normal" text-anchor="middle" >NIPUS</text>
<text x="538.0" y="645.6" fill="#d8803a" font-size="10" font-weight="normal" text-anchor="middle" >EVINA</text>
<text x="417.0" y="807.6" fill="#d8803a" font-size="10" font-weight="normal" text-anchor="middle" >NAVUR</text>
<text x="904.0" y="302.1" fill="#d8803a" font-size="10" font-weight="normal" text-anchor="middle" >117,05</text>
<text x="280.8" y="476.2" fill="#2ea838" font-size="10" font-weight="normal" text-anchor="middle" >LBK  357,00</text>
<text x="228.9" y="555.2" fill="#2ea838" font-size="10" font-weight="normal" text-anchor="middle" >NTL 423,00</text>
<text x="243.0" y="557.6" fill="#2ea838" font-size="10" font-weight="normal" text-anchor="middle" >NTZ 322,00</text>
<text x="928.0" y="540.6" fill="#2ea838" font-size="10" font-weight="normal" text-anchor="middle" >NED 465,00</text>
<text x="936.0" y="548.6" fill="#2ea838" font-size="10" font-weight="normal" text-anchor="middle" >NE 365,00</text>
<text x="781.0" y="617.6" fill="#2ea838" font-size="10" font-weight="normal" text-anchor="middle" >NFA 328,00</text>
<text x="770.0" y="620.6" fill="#2ea838" font-size="10" font-weight="normal" text-anchor="middle" >NFI 313,00</text>
<text x="957.0" y="556.6" fill="#2ea838" font-size="10" font-weight="normal" text-anchor="middle" >NED 365,00</text>
<text x="969.0" y="567.6" fill="#2ea838" font-size="10" font-weight="normal" text-anchor="middle" >NE 465,00</text>
<text x="905.0" y="273.6" fill="#2ea838" font-size="10" font-weight="normal" text-anchor="middle" >423,00</text>
<text x="915.0" y="273.6" fill="#2ea838" font-size="10" font-weight="normal" text-anchor="middle" >465,00</text>
<text x="367.2" y="473.4" fill="#b0a838" font-size="10" font-weight="normal" text-anchor="middle" >LZZ  110,50</text>
<text x="764.0" y="363.6" fill="#b0a838" font-size="10" font-weight="normal" text-anchor="middle" >VA 110,30</text>
<circle cx="299.5" cy="350.7" r="4" fill="#1ee4f6"/>
<circle cx="266" cy="420.5" r="4" fill="#1ee4f6"/>
<circle cx="252.5" cy="497.2" r="4" fill="#1ee4f6"/>
<circle cx="258.3" cy="574.3" r="4" fill="#1ee4f6"/>
<circle cx="285" cy="647" r="4" fill="#1ee4f6"/>
<circle cx="329.4" cy="710.4" r="4" fill="#1ee4f6"/>
<circle cx="388.3" cy="760.5" r="4" fill="#1ee4f6"/>
<circle cx="459.2" cy="792.9" r="4" fill="#1ee4f6"/>
<circle cx="509.3" cy="804.1" r="4" fill="#1ee4f6"/>
<circle cx="535.2" cy="807.3" r="4" fill="#1ee4f6"/>
<circle cx="612.5" cy="800.4" r="4" fill="#1ee4f6"/>
<circle cx="685.2" cy="774.5" r="4" fill="#1ee4f6"/>
<circle cx="749.2" cy="730.6" r="4" fill="#1ee4f6"/>
<circle cx="799.3" cy="671.2" r="4" fill="#1ee4f6"/>
<circle cx="832.2" cy="601" r="4" fill="#1ee4f6"/>
<circle cx="846.4" cy="524.6" r="4" fill="#1ee4f6"/>
<circle cx="840.3" cy="447.5" r="4" fill="#1ee4f6"/>
<circle cx="813.3" cy="374.3" r="4" fill="#1ee4f6"/>
<circle cx="520.2" cy="822.2" r="4" fill="#ff8c1c"/>
<text x="270.0" y="336.8" fill="#30eef8" font-size="10.5" font-weight="bold" text-anchor="middle" >300</text>
<text x="234.5" y="414.2" fill="#30eef8" font-size="10.5" font-weight="bold" text-anchor="middle" >285</text>
<text x="218.6" y="499.3" fill="#30eef8" font-size="10.5" font-weight="bold" text-anchor="middle" >270</text>
<text x="226.5" y="584.3" fill="#30eef8" font-size="10.5" font-weight="bold" text-anchor="middle" >255</text>
<text x="255.5" y="665.3" fill="#30eef8" font-size="10.5" font-weight="bold" text-anchor="middle" >240</text>
<text x="304.5" y="736.3" fill="#30eef8" font-size="10.5" font-weight="bold" text-anchor="middle" >225</text>
<text x="370.0" y="791.3" fill="#30eef8" font-size="10.5" font-weight="bold" text-anchor="middle" >210</text>
<text x="448.5" y="828.3" fill="#30eef8" font-size="10.5" font-weight="bold" text-anchor="middle" >195</text>
<text x="505.5" y="841.3" fill="#30eef8" font-size="10.5" font-weight="bold" text-anchor="middle" >185</text>
<text x="533.5" y="843.3" fill="#30eef8" font-size="10.5" font-weight="bold" text-anchor="middle" >180</text>
<text x="619.5" y="836.3" fill="#30eef8" font-size="10.5" font-weight="bold" text-anchor="middle" >165</text>
<text x="700.5" y="807.3" fill="#30eef8" font-size="10.5" font-weight="bold" text-anchor="middle" >150</text>
<text x="771.5" y="758.3" fill="#30eef8" font-size="10.5" font-weight="bold" text-anchor="middle" >135</text>
<text x="827.5" y="692.3" fill="#30eef8" font-size="10.5" font-weight="bold" text-anchor="middle" >120</text>
<text x="863.5" y="614.3" fill="#30eef8" font-size="10.5" font-weight="bold" text-anchor="middle" >105</text>
<text x="880.0" y="529.3" fill="#30eef8" font-size="10.5" font-weight="bold" text-anchor="middle" >090</text>
<text x="871.0" y="444.8" fill="#30eef8" font-size="10.5" font-weight="bold" text-anchor="middle" >075</text>
<text x="842.5" y="363.3" fill="#30eef8" font-size="10.5" font-weight="bold" text-anchor="middle" >060</text>
<text x="515.5" y="869.3" fill="#ff8c1c" font-size="10.5" font-weight="bold" text-anchor="middle" >183</text>
<text x="552.5" y="473.3" fill="#30eef8" font-size="10" font-weight="normal" text-anchor="middle" >6004</text>
<text x="551.8" y="484.1" fill="#30eef8" font-size="10" font-weight="normal" text-anchor="middle" >264</text>
<text x="97.0" y="138.1" fill="#f09030" font-size="10" font-weight="normal" text-anchor="middle" >290° / 16 kt</text>
<path d="M77,146 L96,152 M89,143 L96,152 L86,157" fill="none" stroke="#ff8c1c" stroke-width="2.2"/>
<g transform="translate(549,514) rotate(185)"><path d="M0,-15 C2,-15 2.5,-11 2.5,-8 L2.5,-3 L14,3 L14,6 L2.5,3 L2,10 L6,13 L6,15 L0,14 L-6,15 L-6,13 L-2,10 L-2.5,3 L-14,6 L-14,3 L-2.5,-3 L-2.5,-8 C-2.5,-11 -2,-15 0,-15Z" fill="#20e0f4"/></g>
<text x="1052" y="197" fill="#3479b2" font-size="10.5" text-anchor="end">XE</text>
<text x="201" y="185" fill="#3479b2" font-size="10.5">VI</text>
</svg></div>
 <div id="status">
  <span style="left:8px">11:54:20 UTC</span><div class="sep" style="left:82px"></div>
  <span style="left:93px">100NM</span><div class="sep" style="left:132px"></div>
  <span style="left:140px">MagVar: E 03°</span><div class="sep" style="left:214px"></div>
  <span style="left:232px">N51°39'14'' - E020°24'00''</span><div class="sep" style="left:374px"></div>
  <span style="left:408px;color:#e8141c">MD11 Cargo PMDG</span><div class="sep" style="left:536px"></div>
  <span style="left:550px">3473 kg</span><div class="sep" style="left:602px"></div>
  <span style="left:625px">N52°24'23'' - E022°16'09''</span>
 </div>
</div>

<div id="nw">
 <div id="nwtitle"><div class="t">FlightSim Commander Navigation Data</div></div>
 <div id="nwbody"></div>
</div>
<div style="position:absolute;left:208px;top:125px;width:684px;height:207px;background:#ebe9e0;border-right:1px solid #8c8a84;border-bottom:1px solid #8c8a84;box-shadow:inset 1px 1px 0 #fff;font-size:11px;color:#000">
<div style="position:absolute;left:8px;top:5px;width:595px;height:37px;background:#fffdd2;border-top:1px solid #8a8878;border-left:1px solid #8a8878;border-bottom:1px solid #fff;border-right:1px solid #fff;box-shadow:inset 1px 1px 0 #404040"></div>
<div style="position:absolute;left:11px;top:8px;color:#101c78;font-size:11px;white-space:nowrap;letter-spacing:-0.1px">EPWA EVIN2K EVINA N744 TUSIN UM984 MIKOV UQ984 SITNI UL856 MATIG Q113 AMADI NAP26 EDDM</div>
<div style="position:absolute;left:585px;top:6px;width:17px;height:17px;background:#f4f3ee;border:1px solid #e0ded4"><svg width="17" height="17" style="position:absolute;left:0;top:0"><path d="M4,9 L8,5 L12,9" fill="none" stroke="#c0c0b8" stroke-width="2"/></svg></div>
<div style="position:absolute;left:585px;top:24px;width:17px;height:17px;background:#f4f3ee;border:1px solid #e0ded4"><svg width="17" height="17" style="position:absolute;left:0;top:0"><path d="M4,6 L8,10 L12,6" fill="none" stroke="#c0c0b8" stroke-width="2"/></svg></div>
<div style="position:absolute;left:608px;top:6px;width:13px;height:13px;background:#fff;border:1px solid #1c5180"><svg width="11" height="11" style="position:absolute;left:0;top:0"><path d="M2,5 L4.5,8 L9,2" fill="none" stroke="#e01818" stroke-width="2"/></svg></div>
<div style="position:absolute;left:624px;top:5px;color:#1428b4;font-size:11.5px">High</div>
<div style="position:absolute;left:608px;top:28px;width:13px;height:13px;background:#fff;border:1px solid #1c5180"><svg width="11" height="11" style="position:absolute;left:0;top:0"><path d="M2,5 L4.5,8 L9,2" fill="none" stroke="#e01818" stroke-width="2"/></svg></div>
<div style="position:absolute;left:624px;top:27px;color:#1428b4;font-size:11.5px">Low</div>
<div style="position:absolute;left:648px;top:5px;width:30px;height:33px;background:linear-gradient(#fbfbf9,#ecebe5 70%,#d8d6ce);border:1px solid #b0aea4;border-radius:2px;font-size:12px;text-align:center;line-height:31px">OK</div>
<div style="position:absolute;left:9px;top:47px;width:636px;height:42px;background:#edebe3;border-top:1px solid #c8c6bc;border-left:1px solid #c8c6bc;border-bottom:1px solid #fff;border-right:1px solid #fff;box-shadow:inset 1px 1px 0 #a8a69c"></div>
<div style="position:absolute;left:16.0px;top:52px;color:#000;font-size:11px;white-space:nowrap">EET:</div>
<div style="position:absolute;left:43.0px;top:52px;color:#d01818;font-size:11px;white-space:nowrap">01:20</div>
<div style="position:absolute;left:79.2px;top:52px;color:#000;font-size:11px;white-space:nowrap">DTG:</div>
<div style="position:absolute;left:112.2px;top:52px;color:#d01818;font-size:11px;white-space:nowrap">512</div>
<div style="position:absolute;left:156.2px;top:52px;color:#000;font-size:11px;white-space:nowrap">TAS:</div>
<div style="position:absolute;left:182.5px;top:52px;color:#d01818;font-size:11px;white-space:nowrap">460</div>
<div style="position:absolute;left:214.1px;top:52px;color:#000;font-size:11px;white-space:nowrap">FL:</div>
<div style="position:absolute;left:242.8px;top:52px;color:#1c20a8;font-size:11px;white-space:nowrap">0</div>
<div style="position:absolute;left:293.8px;top:52px;color:#000;font-size:11px;white-space:nowrap">SID:</div>
<div style="position:absolute;left:329.0px;top:52px;color:#d01818;font-size:11px;white-space:nowrap">EVIN2K (33)</div>
<div style="position:absolute;left:16.0px;top:72px;color:#1c20a8;font-size:11px;white-space:nowrap">ATD: 11:43</div>
<div style="position:absolute;left:79.2px;top:72px;color:#1c20a8;font-size:11px;white-space:nowrap">ETE: 01:56</div>
<div style="position:absolute;left:156.2px;top:72px;color:#1c20a8;font-size:11px;white-space:nowrap">ETA: 13:51</div>
<div style="position:absolute;left:293.8px;top:72px;color:#000;font-size:11px;white-space:nowrap">STAR:</div>
<div style="position:absolute;left:454.0px;top:72px;color:#000;font-size:11px;white-space:nowrap">Transition:</div>
<div style="position:absolute;left:516.5px;top:72px;color:#d01818;font-size:11px;white-space:nowrap">NAP26 (ILS26L)</div>
<div style="position:absolute;left:261px;top:51px;width:13px;height:13px;background:linear-gradient(#fafaf8,#e0ded6);border:1px solid #a8a69e"><svg width="11" height="11" style="position:absolute;left:0;top:0"><path d="M7,3 L3,6.5 L7,10Z" fill="#000"/></svg></div>
<div style="position:absolute;left:274px;top:51px;width:13px;height:13px;background:linear-gradient(#fafaf8,#e0ded6);border:1px solid #a8a69e"><svg width="11" height="11" style="position:absolute;left:0;top:0"><path d="M4,3 L8,6.5 L4,10Z" fill="#000"/></svg></div>
<div style="position:absolute;left:648px;top:46px;width:30px;height:20px;background:linear-gradient(#fbfbf9,#e4e2da);border:1px solid #a8a69e;border-radius:2px"><svg width="28" height="18" style="position:absolute;left:0;top:0"><rect x="8" y="4" width="12" height="10" fill="#e8f0ff" stroke="#2848a0"/><rect x="8" y="4" width="12" height="3" fill="#2858c0"/><path d="M8,10 H20 M12,7 V14 M16,7 V14" stroke="#2848a0" stroke-width="0.8"/></svg></div>
<div style="position:absolute;left:648px;top:68px;width:30px;height:20px;background:linear-gradient(#fbfbf9,#e4e2da);border:1px solid #a8a69e;border-radius:2px"><svg width="28" height="18" style="position:absolute;left:0;top:0"><circle cx="12" cy="7" r="3.5" fill="#e0b020" stroke="#806010"/><path d="M13,9 L18,16 M16,13 L18,12" stroke="#c09018" stroke-width="2"/><path d="M9,4 L12,1" stroke="#505050" stroke-width="1.5"/></svg></div>
<div style="position:absolute;left:9px;top:94px;width:650px;height:103px;background:#fffcd0"></div>
<div style="position:absolute;left:9px;top:94px;width:650px;height:17px;background:#0cb8c4"></div>
<div style="position:absolute;left:12.4px;top:96px;font-size:11px;color:#000;white-space:nowrap">Sym</div>
<div style="position:absolute;left:37.9px;top:96px;font-size:11px;color:#000;white-space:nowrap">Code</div>
<div style="position:absolute;left:95.0px;top:96px;font-size:11px;color:#000;white-space:nowrap">Name</div>
<div style="position:absolute;left:275.3px;top:96px;font-size:11px;color:#000;white-space:nowrap">Freq</div>
<div style="position:absolute;left:322.3px;top:96px;font-size:11px;color:#000;white-space:nowrap">Course</div>
<div style="position:absolute;left:379.3px;top:96px;font-size:11px;color:#000;white-space:nowrap">Distance</div>
<div style="position:absolute;left:428.9px;top:96px;font-size:11px;color:#000;white-space:nowrap">ETO</div>
<div style="position:absolute;left:462.4px;top:96px;font-size:11px;color:#000;white-space:nowrap">ATO</div>
<div style="position:absolute;left:495.4px;top:96px;font-size:11px;color:#000;white-space:nowrap">GS</div>
<div style="position:absolute;left:535.4px;top:96px;font-size:11px;color:#000;white-space:nowrap">Altitude</div>
<div style="position:absolute;left:585.3px;top:96px;font-size:11px;color:#000;white-space:nowrap">Fuel (kg)</div>
<div style="position:absolute;left:34.9px;top:94px;width:1px;height:102px;background:#c4c4b4"></div>
<div style="position:absolute;left:34.9px;top:94px;width:1px;height:17px;background:#7ad4dc"></div>
<div style="position:absolute;left:92.0px;top:94px;width:1px;height:102px;background:#c4c4b4"></div>
<div style="position:absolute;left:92.0px;top:94px;width:1px;height:17px;background:#7ad4dc"></div>
<div style="position:absolute;left:272.3px;top:94px;width:1px;height:102px;background:#c4c4b4"></div>
<div style="position:absolute;left:272.3px;top:94px;width:1px;height:17px;background:#7ad4dc"></div>
<div style="position:absolute;left:319.3px;top:94px;width:1px;height:102px;background:#c4c4b4"></div>
<div style="position:absolute;left:319.3px;top:94px;width:1px;height:17px;background:#7ad4dc"></div>
<div style="position:absolute;left:376.3px;top:94px;width:1px;height:102px;background:#c4c4b4"></div>
<div style="position:absolute;left:376.3px;top:94px;width:1px;height:17px;background:#7ad4dc"></div>
<div style="position:absolute;left:425.9px;top:94px;width:1px;height:102px;background:#c4c4b4"></div>
<div style="position:absolute;left:425.9px;top:94px;width:1px;height:17px;background:#7ad4dc"></div>
<div style="position:absolute;left:459.4px;top:94px;width:1px;height:102px;background:#c4c4b4"></div>
<div style="position:absolute;left:459.4px;top:94px;width:1px;height:17px;background:#7ad4dc"></div>
<div style="position:absolute;left:492.4px;top:94px;width:1px;height:102px;background:#c4c4b4"></div>
<div style="position:absolute;left:492.4px;top:94px;width:1px;height:17px;background:#7ad4dc"></div>
<div style="position:absolute;left:532.4px;top:94px;width:1px;height:102px;background:#c4c4b4"></div>
<div style="position:absolute;left:532.4px;top:94px;width:1px;height:17px;background:#7ad4dc"></div>
<div style="position:absolute;left:582.3px;top:94px;width:1px;height:102px;background:#c4c4b4"></div>
<div style="position:absolute;left:582.3px;top:94px;width:1px;height:17px;background:#7ad4dc"></div>
<div style="position:absolute;left:9px;top:110.5px;width:650px;height:1px;background:#c8c8b8"></div>
<div style="position:absolute;left:9px;top:127.9px;width:650px;height:1px;background:#c8c8b8"></div>
<div style="position:absolute;left:9px;top:145.4px;width:650px;height:1px;background:#c8c8b8"></div>
<div style="position:absolute;left:9px;top:162.0px;width:650px;height:1px;background:#c8c8b8"></div>
<div style="position:absolute;left:9px;top:178.9px;width:650px;height:1px;background:#c8c8b8"></div>
<div style="position:absolute;left:9px;top:195.5px;width:650px;height:1px;background:#c8c8b8"></div>
<div style="position:absolute;left:11px;top:112.5px;width:22px;height:14px;background:#b8cce6"></div>
<svg style="position:absolute;left:11px;top:112.5px" width="22" height="14"><rect x="6" y="3" width="10" height="8" fill="none" stroke="#1a30c8" stroke-width="1.3"/></svg>
<div style="position:absolute;left:37.9px;top:112.5px;font-size:11.5px;color:#000;white-space:pre">EVDEX</div>
<div style="position:absolute;left:95.0px;top:112.5px;font-size:11.5px;color:#000;white-space:pre">Evdex [  250kt]</div>
<div style="position:absolute;left:322.3px;top:112.5px;font-size:11.5px;color:#000;white-space:pre">217°/214°</div>
<div style="position:absolute;left:379.3px;top:112.5px;font-size:11.5px;color:#000;white-space:pre">005 NM</div>
<div style="position:absolute;left:428.9px;top:112.5px;font-size:11.5px;color:#000;white-space:pre">11:51</div>
<div style="position:absolute;left:462.4px;top:112.5px;font-size:11.5px;color:#c81818;white-space:pre">11:50</div>
<div style="position:absolute;left:492.4px;width:37.0px;text-align:right;top:112.5px;font-size:11.5px;color:#c81818;white-space:pre">228 kt</div>
<div style="position:absolute;left:532.4px;width:46.9px;text-align:right;top:112.5px;font-size:11.5px;color:#c81818;white-space:pre">5995 ft</div>
<div style="position:absolute;left:582.3px;width:73.4px;text-align:right;top:112.5px;font-size:11.5px;color:#c81818;white-space:pre">3530 / 03%</div>
<div style="position:absolute;left:11px;top:129.9px;width:22px;height:14px;background:#b8cce6"></div>
<svg style="position:absolute;left:11px;top:129.9px" width="22" height="14"><rect x="6" y="3" width="10" height="8" fill="none" stroke="#1a30c8" stroke-width="1.3"/></svg>
<div style="position:absolute;left:37.9px;top:129.9px;font-size:11.5px;color:#000;white-space:pre">NIPUS</div>
<div style="position:absolute;left:95.0px;top:129.9px;font-size:11.5px;color:#000;white-space:pre">Nipus [  250kt/18000ft]</div>
<div style="position:absolute;left:322.3px;top:129.9px;font-size:11.5px;color:#000;white-space:pre">185°/183°</div>
<div style="position:absolute;left:379.3px;top:129.9px;font-size:11.5px;color:#000;white-space:pre">018 NM</div>
<div style="position:absolute;left:428.9px;top:129.9px;font-size:11.5px;color:#000;white-space:pre">11:55</div>
<div style="position:absolute;left:462.4px;top:129.9px;font-size:11.5px;color:#c81818;white-space:pre">11:54</div>
<div style="position:absolute;left:492.4px;width:37.0px;text-align:right;top:129.9px;font-size:11.5px;color:#c81818;white-space:pre">265 kt</div>
<div style="position:absolute;left:532.4px;width:46.9px;text-align:right;top:129.9px;font-size:11.5px;color:#c81818;white-space:pre">5991 ft</div>
<div style="position:absolute;left:582.3px;width:73.4px;text-align:right;top:129.9px;font-size:11.5px;color:#c81818;white-space:pre">3476 / 04%</div>
<div style="position:absolute;left:11px;top:147.4px;width:22px;height:14px;background:#b8cce6"></div>
<svg style="position:absolute;left:11px;top:147.4px" width="22" height="14"><path d="M6,12 L11,2 L16,12Z" fill="none" stroke="#1a30c8" stroke-width="1.4"/></svg>
<div style="position:absolute;left:37.9px;top:147.4px;font-size:11.5px;color:#000;white-space:pre">EVINA</div>
<div style="position:absolute;left:95.0px;top:147.4px;font-size:11.5px;color:#000;white-space:pre">Evina [  250kt]</div>
<div style="position:absolute;left:322.3px;top:147.4px;font-size:11.5px;color:#000;white-space:pre">185°/183°</div>
<div style="position:absolute;left:379.3px;top:147.4px;font-size:11.5px;color:#000;white-space:pre">016 NM</div>
<div style="position:absolute;left:428.9px;top:147.4px;font-size:11.5px;color:#000;white-space:pre">11:59</div>
<div style="position:absolute;left:11px;top:164.0px;width:22px;height:14px;background:#10e030"></div>
<svg style="position:absolute;left:11px;top:164.0px" width="22" height="14"><path d="M6,12 L11,2 L16,12Z" fill="none" stroke="#1a30c8" stroke-width="1.4"/></svg>
<div style="position:absolute;left:37.9px;top:164.0px;font-size:11.5px;color:#000;white-space:pre">EVINA</div>
<div style="position:absolute;left:95.0px;top:164.0px;font-size:11.5px;color:#000;white-space:pre">Evina</div>
<div style="position:absolute;left:379.3px;top:164.0px;font-size:11.5px;color:#000;white-space:pre">000 NM</div>
<div style="position:absolute;left:428.9px;top:164.0px;font-size:11.5px;color:#000;white-space:pre">11:59</div>
<div style="position:absolute;left:11px;top:180.9px;width:22px;height:14px;background:#10e030"></div>
<svg style="position:absolute;left:11px;top:180.9px" width="22" height="14"><path d="M6,12 L11,2 L16,12Z" fill="none" stroke="#1a30c8" stroke-width="1.4"/></svg>
<div style="position:absolute;left:37.9px;top:180.9px;font-size:11.5px;color:#000;white-space:pre">NAVUR</div>
<div style="position:absolute;left:95.0px;top:180.9px;font-size:11.5px;color:#000;white-space:pre">Navur (N744 195-460)</div>
<div style="position:absolute;left:322.3px;top:180.9px;font-size:11.5px;color:#000;white-space:pre">217°/215°</div>
<div style="position:absolute;left:379.3px;top:180.9px;font-size:11.5px;color:#000;white-space:pre">028 NM</div>
<div style="position:absolute;left:428.9px;top:180.9px;font-size:11.5px;color:#000;white-space:pre">12:05</div>
<div style="position:absolute;left:659px;top:94px;width:17px;height:102px;background:#f3f2ec"></div>
<div style="position:absolute;left:659px;top:94px;width:17px;height:17px;background:linear-gradient(#fdfdfb,#e6e4dc);border:1px solid #b8b6ac;border-radius:2px"><svg width="15" height="15" style="position:absolute"><path d="M3,10 L7.5,5 L12,10Z" fill="#000"/></svg></div>
<div style="position:absolute;left:659px;top:115px;width:17px;height:18px;background:linear-gradient(90deg,#fdfdfb,#e6e4dc);border:1px solid #b8b6ac;border-radius:2px"></div>
<div style="position:absolute;left:659px;top:180px;width:17px;height:16px;background:linear-gradient(#fdfdfb,#e6e4dc);border:1px solid #b8b6ac;border-radius:2px"><svg width="15" height="15" style="position:absolute"><path d="M3,5 L7.5,10 L12,5Z" fill="#000"/></svg></div>
</div><div style="position:absolute;left:1075.5px;top:97.5px;width:248.0px;height:201.5px;border:1px solid #3ddbd0;border-radius:5px"></div><div style="position:absolute;left:1082px;top:89.5px;width:59px;height:14px;background:#0f1000"></div>
<div style="position:absolute;left:1088.0px;top:89.4px;font-size:13.5px;line-height:15.5px;color:#3ddbd0;font-weight:normal;white-space:nowrap;">General</div>
<div style="position:absolute;left:1083.5px;top:105.5px;width:112.2px;height:26.0px;border:1px solid #3ddbd0;box-shadow:inset 0 0 0 1px #3ddbd080"></div>
<div style="position:absolute;left:1203.4px;top:105.5px;width:112.3px;height:26.0px;border:1px solid #3ddbd0;box-shadow:inset 0 0 0 1px #3ddbd080"></div>
<div style="position:absolute;left:1085.5px;top:114.4px;font-size:13px;line-height:14.9px;color:#3ddbd0;font-weight:normal;white-space:nowrap;">Hdg</div>
<div style="position:absolute;left:1205.4px;top:114.4px;font-size:13px;line-height:14.9px;color:#3ddbd0;font-weight:normal;white-space:nowrap;">Trk</div>
<div style="position:absolute;right:150.3px;top:107.8px;font-size:18.5px;line-height:21.3px;color:#c9c5b6;font-weight:normal;white-space:nowrap;">185°</div>
<div style="position:absolute;right:30.3px;top:107.8px;font-size:18.5px;line-height:21.3px;color:#c9c5b6;font-weight:normal;white-space:nowrap;">181°</div>
<div style="position:absolute;left:1083.5px;top:137.5px;width:112.2px;height:26.0px;border:1px solid #3ddbd0;box-shadow:inset 0 0 0 1px #3ddbd080"></div>
<div style="position:absolute;left:1203.4px;top:137.5px;width:112.3px;height:26.0px;border:1px solid #3ddbd0;box-shadow:inset 0 0 0 1px #3ddbd080"></div>
<div style="position:absolute;left:1085.5px;top:146.4px;font-size:13px;line-height:14.9px;color:#3ddbd0;font-weight:normal;white-space:nowrap;">Alt</div>
<div style="position:absolute;left:1205.4px;top:146.4px;font-size:13px;line-height:14.9px;color:#3ddbd0;font-weight:normal;white-space:nowrap;">AGL</div>
<div style="position:absolute;right:150.3px;top:139.8px;font-size:18.5px;line-height:21.3px;color:#c9c5b6;font-weight:normal;white-space:nowrap;">6004 ft</div>
<div style="position:absolute;right:30.3px;top:139.8px;font-size:18.5px;line-height:21.3px;color:#c9c5b6;font-weight:normal;white-space:nowrap;">5448 ft</div>
<div style="position:absolute;left:1083.5px;top:169.5px;width:112.2px;height:26.0px;border:1px solid #3ddbd0;box-shadow:inset 0 0 0 1px #3ddbd080"></div>
<div style="position:absolute;left:1203.4px;top:169.5px;width:112.3px;height:26.0px;border:1px solid #3ddbd0;box-shadow:inset 0 0 0 1px #3ddbd080"></div>
<div style="position:absolute;left:1085.5px;top:178.4px;font-size:13px;line-height:14.9px;color:#3ddbd0;font-weight:normal;white-space:nowrap;">IAS</div>
<div style="position:absolute;left:1205.4px;top:178.4px;font-size:13px;line-height:14.9px;color:#3ddbd0;font-weight:normal;white-space:nowrap;">GS</div>
<div style="position:absolute;right:150.3px;top:171.8px;font-size:18.5px;line-height:21.3px;color:#c9c5b6;font-weight:normal;white-space:nowrap;">243 kt</div>
<div style="position:absolute;right:30.3px;top:171.8px;font-size:18.5px;line-height:21.3px;color:#c9c5b6;font-weight:normal;white-space:nowrap;">264 kt</div>
<div style="position:absolute;left:1083.5px;top:201.5px;width:112.2px;height:26.0px;border:1px solid #3ddbd0;box-shadow:inset 0 0 0 1px #3ddbd080"></div>
<div style="position:absolute;left:1203.4px;top:201.5px;width:112.3px;height:26.0px;border:1px solid #3ddbd0;box-shadow:inset 0 0 0 1px #3ddbd080"></div>
<div style="position:absolute;left:1085.5px;top:210.4px;font-size:13px;line-height:14.9px;color:#3ddbd0;font-weight:normal;white-space:nowrap;">True</div>
<div style="position:absolute;left:1205.4px;top:210.4px;font-size:13px;line-height:14.9px;color:#3ddbd0;font-weight:normal;white-space:nowrap;">MVar</div>
<div style="position:absolute;right:150.3px;top:203.8px;font-size:18.5px;line-height:21.3px;color:#c9c5b6;font-weight:normal;white-space:nowrap;">188°</div>
<div style="position:absolute;right:30.3px;top:203.8px;font-size:18.5px;line-height:21.3px;color:#c9c5b6;font-weight:normal;white-space:nowrap;">2,7°</div>
<div style="position:absolute;left:1083.5px;top:233.5px;width:112.2px;height:26.0px;border:1px solid #3ddbd0;box-shadow:inset 0 0 0 1px #3ddbd080"></div>
<div style="position:absolute;left:1203.4px;top:233.5px;width:112.3px;height:26.0px;border:1px solid #3ddbd0;box-shadow:inset 0 0 0 1px #3ddbd080"></div>
<div style="position:absolute;left:1085.5px;top:242.4px;font-size:13px;line-height:14.9px;color:#3ddbd0;font-weight:normal;white-space:nowrap;">WCA</div>
<div style="position:absolute;left:1205.4px;top:242.4px;font-size:13px;line-height:14.9px;color:#3ddbd0;font-weight:normal;white-space:nowrap;"></div>
<div style="position:absolute;right:150.3px;top:235.8px;font-size:18.5px;line-height:21.3px;color:#c9c5b6;font-weight:normal;white-space:nowrap;">3°</div>
<div style="position:absolute;right:30.3px;top:235.8px;font-size:18.5px;line-height:21.3px;color:#c9c5b6;font-weight:normal;white-space:nowrap;">287°/16 kt</div>
<div style="position:absolute;left:1083.5px;top:265.5px;width:232.2px;height:26.5px;border:1px solid #3ddbd0;box-shadow:inset 0 0 0 1px #3ddbd080"></div>
<div style="position:absolute;left:1075.5px;top:309px;width:248.0px;height:194.5px;border:1px solid #d8782e;border-radius:5px"></div><div style="position:absolute;left:1082px;top:301px;width:70px;height:14px;background:#0f1000"></div>
<div style="position:absolute;left:1087.0px;top:301.4px;font-size:13.5px;line-height:15.5px;color:#d8782e;font-weight:normal;white-space:nowrap;">Waypoint</div>
<div style="position:absolute;left:1082.5px;top:316.6px;font-size:16px;line-height:18.4px;color:#c9c5b6;font-weight:normal;white-space:nowrap;">EVINA</div>
<div style="position:absolute;left:1082.5px;top:341.6px;font-size:16px;line-height:18.4px;color:#c9c5b6;font-weight:normal;white-space:nowrap;">EVINA</div>
<div style="position:absolute;left:1259.0px;top:316.0px;width:57.0px;height:21.5px;border:1px solid #3ddbd0;box-shadow:inset 0 0 0 1px #3ddbd080"></div>
<div style="position:absolute;right:30.0px;top:318.6px;font-size:15px;line-height:17.2px;color:#c9c5b6;font-weight:normal;white-space:nowrap;">FlyBy</div>
<div style="position:absolute;left:1083.5px;top:369.4px;width:112.2px;height:26.1px;border:1px solid #3ddbd0;box-shadow:inset 0 0 0 1px #3ddbd080"></div>
<div style="position:absolute;left:1203.1px;top:369.4px;width:112.8px;height:26.1px;border:1px solid #3ddbd0;box-shadow:inset 0 0 0 1px #3ddbd080"></div>
<div style="position:absolute;left:1085.5px;top:378.4px;font-size:13px;line-height:14.9px;color:#3ddbd0;font-weight:normal;white-space:nowrap;">BRG</div>
<div style="position:absolute;left:1205.0px;top:378.4px;font-size:13px;line-height:14.9px;color:#3ddbd0;font-weight:normal;white-space:nowrap;">FRQ</div>
<div style="position:absolute;right:150.0px;top:370.8px;font-size:18.5px;line-height:21.3px;color:#c9c5b6;font-weight:bold;white-space:nowrap;">183°</div>
<div style="position:absolute;left:1083.5px;top:401.1px;width:112.2px;height:26.4px;border:1px solid #3ddbd0;box-shadow:inset 0 0 0 1px #3ddbd080"></div>
<div style="position:absolute;left:1203.1px;top:401.1px;width:112.8px;height:26.4px;border:1px solid #3ddbd0;box-shadow:inset 0 0 0 1px #3ddbd080"></div>
<div style="position:absolute;left:1085.5px;top:410.4px;font-size:13px;line-height:14.9px;color:#3ddbd0;font-weight:normal;white-space:nowrap;">DIST</div>
<div style="position:absolute;left:1205.0px;top:410.4px;font-size:13px;line-height:14.9px;color:#3ddbd0;font-weight:normal;white-space:nowrap;">ETE</div>
<div style="position:absolute;right:150.0px;top:402.8px;font-size:18.5px;line-height:21.3px;color:#c9c5b6;font-weight:bold;white-space:nowrap;">16,1</div>
<div style="position:absolute;right:29.0px;top:402.8px;font-size:18.5px;line-height:21.3px;color:#c9c5b6;font-weight:bold;white-space:nowrap;">00:04</div>
<div style="position:absolute;left:1083.5px;top:433.1px;width:112.2px;height:26.4px;border:1px solid #3ddbd0;box-shadow:inset 0 0 0 1px #3ddbd080"></div>
<div style="position:absolute;left:1203.1px;top:433.1px;width:112.8px;height:26.4px;border:1px solid #3ddbd0;box-shadow:inset 0 0 0 1px #3ddbd080"></div>
<div style="position:absolute;left:1039.6px;width:200px;text-align:center;top:437.6px;font-size:16px;line-height:18.4px;color:#c9c5b6;font-weight:normal;white-space:nowrap;">&lt;&lt;&lt; PrevWP</div>
<div style="position:absolute;left:1159.5px;width:200px;text-align:center;top:437.6px;font-size:16px;line-height:18.4px;color:#c9c5b6;font-weight:normal;white-space:nowrap;">NextWP &gt;&gt;&gt;</div>
<div style="position:absolute;left:1083.5px;top:465.2px;width:112.2px;height:26.1px;border:1px solid #3ddbd0;box-shadow:inset 0 0 0 1px #3ddbd080"></div>
<div style="position:absolute;left:1203.1px;top:465.2px;width:112.8px;height:26.1px;border:1px solid #3ddbd0;box-shadow:inset 0 0 0 1px #3ddbd080"></div>
<div style="position:absolute;left:1039.6px;width:200px;text-align:center;top:469.6px;font-size:16px;line-height:18.4px;color:#c9c5b6;font-weight:normal;white-space:nowrap;">AutoHdg ON</div>
<div style="position:absolute;left:1159.5px;width:200px;text-align:center;top:469.6px;font-size:16px;line-height:18.4px;color:#c9c5b6;font-weight:normal;white-space:nowrap;">GoTo OFF</div>
<div style="position:absolute;left:1075.5px;top:513.7px;width:248.0px;height:193.5999999999999px;border:1px solid #3ddbd0;border-radius:5px"></div><div style="position:absolute;left:1082px;top:505.70000000000005px;width:120px;height:14px;background:#0f1000"></div>
<div style="position:absolute;left:1087.5px;top:506.4px;font-size:13.5px;line-height:15.5px;color:#3ddbd0;font-weight:normal;white-space:nowrap;">Departure / Arrival</div>
<div style="position:absolute;left:1083.0px;top:521.2px;width:232.6px;height:26.4px;border:1px solid #3ddbd0;box-shadow:inset 0 0 0 1px #3ddbd080"></div>
<div style="position:absolute;left:1084.5px;top:525.6px;font-size:15.5px;line-height:17.8px;color:#c9c5b6;font-weight:normal;white-space:nowrap;">EDDM - Munich</div>
<div style="position:absolute;left:1083.0px;top:553.0px;width:110.8px;height:26.4px;border:1px solid #3ddbd0;box-shadow:inset 0 0 0 1px #3ddbd080"></div>
<div style="position:absolute;left:1203.0px;top:553.0px;width:112.6px;height:26.4px;border:1px solid #3ddbd0;box-shadow:inset 0 0 0 1px #3ddbd080"></div>
<div style="position:absolute;left:1085.0px;top:562.4px;font-size:13px;line-height:14.9px;color:#3ddbd0;font-weight:normal;white-space:nowrap;">Alt</div>
<div style="position:absolute;left:1205.0px;top:562.4px;font-size:13px;line-height:14.9px;color:#3ddbd0;font-weight:normal;white-space:nowrap;">Parking</div>
<div style="position:absolute;right:151.5px;top:556.7px;font-size:16.5px;line-height:19.0px;color:#c9c5b6;font-weight:normal;white-space:nowrap;">1483 ft</div>
<div style="position:absolute;right:30.0px;top:556.7px;font-size:16.5px;line-height:19.0px;color:#c9c5b6;font-weight:normal;white-space:nowrap;">58</div>
<div style="position:absolute;left:1083.0px;top:585.3px;width:110.8px;height:26.1px;border:1px solid #3ddbd0;box-shadow:inset 0 0 0 1px #3ddbd080"></div>
<div style="position:absolute;left:1203.0px;top:585.3px;width:112.6px;height:26.1px;border:1px solid #3ddbd0;box-shadow:inset 0 0 0 1px #3ddbd080"></div>
<div style="position:absolute;left:1085.0px;top:594.4px;font-size:13px;line-height:14.9px;color:#3ddbd0;font-weight:normal;white-space:nowrap;">DTG</div>
<div style="position:absolute;left:1205.0px;top:594.4px;font-size:13px;line-height:14.9px;color:#3ddbd0;font-weight:normal;white-space:nowrap;">ETE</div>
<div style="position:absolute;right:151.5px;top:588.7px;font-size:16.5px;line-height:19.0px;color:#c9c5b6;font-weight:normal;white-space:nowrap;">512</div>
<div style="position:absolute;right:30.0px;top:588.7px;font-size:16.5px;line-height:19.0px;color:#c9c5b6;font-weight:normal;white-space:nowrap;">01:56</div><div style="position:absolute;left:1074px;top:736px;width:245px;height:165px;border-radius:10px;background:linear-gradient(90deg,#6a90b8 0%,#2a3c50 3%,#1a2430 50%,#2a4058 80%,#6c9cc4 88%,#88b4d8 92%,#5a88b0 100%)"></div>
<div style="position:absolute;left:1275px;top:737px;width:43px;height:163px;border-radius:0 9px 9px 0;background:linear-gradient(90deg,#3a5a78,#6a98c0 30%,#7aa6cc 60%,#5a86b0 100%)"></div>
<div style="position:absolute;left:1076px;top:738px;width:199px;height:161px;border-radius:9px;background:#050607;border:1px solid #4a6680"></div>
<div style="position:absolute;left:1080.5px;top:742px;width:191.5px;height:128px;border-radius:6px;background:#000;border:1px solid #6a6c70"></div>
<div style="position:absolute;left:1162px;top:737px;width:26px;height:11px;background:#101214"></div>
<div style="position:absolute;left:1160px;top:738px;width:30px;text-align:center;font-size:9px;color:#d8d8d8;letter-spacing:1px">FSC</div>
<div style="position:absolute;left:1080px;top:871px;width:192px;height:26px;border-radius:5px;background:#060708;border:1px solid #5a5c60"></div>
<div style="position:absolute;left:1084.3px;top:874.3px;width:15.3px;height:16.2px;border-radius:3px;background:linear-gradient(#4a4c50 0%,#2a2c30 45%,#121316 55%,#1c1e22 100%);border:1px solid #5a5c62;font-size:10.5px;color:#fff;text-align:center;line-height:14.2px;white-space:nowrap"><svg width="12" height="10" style="margin-top:3px"><path d="M1.5,5 L6,1.5 L6,3.5 L10.5,3.5 L10.5,6.5 L6,6.5 L6,8.5Z" fill="none" stroke="#fff" stroke-width="1.3"/></svg></div>
<div style="position:absolute;left:1103.5px;top:874.3px;width:15.8px;height:16.2px;border-radius:3px;background:linear-gradient(#4a4c50 0%,#2a2c30 45%,#121316 55%,#1c1e22 100%);border:1px solid #5a5c62;font-size:10.5px;color:#fff;text-align:center;line-height:14.2px;white-space:nowrap"><svg width="12" height="10" style="margin-top:3px"><path d="M10.5,5 L6,1.5 L6,3.5 L1.5,3.5 L1.5,6.5 L6,6.5 L6,8.5Z" fill="none" stroke="#fff" stroke-width="1.3"/></svg></div>
<div style="position:absolute;left:1124.7px;top:875.2px;width:69.0px;height:16.2px;border-radius:3px;background:linear-gradient(#4a4c50 0%,#2a2c30 45%,#121316 55%,#1c1e22 100%);border:1px solid #5a5c62;font-size:11px;color:#28d028;text-align:center;line-height:14.2px;white-space:nowrap">AutoHdg</div>
<div style="position:absolute;left:1198.0px;top:875.2px;width:69.1px;height:16.2px;border-radius:3px;background:linear-gradient(#4a4c50 0%,#2a2c30 45%,#121316 55%,#1c1e22 100%);border:1px solid #5a5c62;font-size:11px;color:#d81818;text-align:center;line-height:14.2px;white-space:nowrap">GoTo</div>
<div style="position:absolute;left:1278.8px;top:742.6px;width:35.8px;height:14.7px;border-radius:3px;background:linear-gradient(#4a4c50 0%,#2a2c30 45%,#121316 55%,#1c1e22 100%);border:1px solid #5a5c62;font-size:9.5px;color:#30d030;text-align:center;line-height:12.7px;white-space:nowrap">Gen</div>
<div style="position:absolute;left:1278.8px;top:761.4px;width:35.8px;height:14.9px;border-radius:3px;background:linear-gradient(#4a4c50 0%,#2a2c30 45%,#121316 55%,#1c1e22 100%);border:1px solid #5a5c62;font-size:9.5px;color:#d81818;text-align:center;line-height:12.9px;white-space:nowrap">wP</div>
<div style="position:absolute;left:1278.8px;top:780.2px;width:35.8px;height:14.7px;border-radius:3px;background:linear-gradient(#4a4c50 0%,#2a2c30 45%,#121316 55%,#1c1e22 100%);border:1px solid #5a5c62;font-size:9.5px;color:#d81818;text-align:center;line-height:12.7px;white-space:nowrap">Air</div>
<div style="position:absolute;left:1278.8px;top:799.0px;width:35.8px;height:14.9px;border-radius:3px;background:linear-gradient(#4a4c50 0%,#2a2c30 45%,#121316 55%,#1c1e22 100%);border:1px solid #5a5c62;font-size:9.5px;color:#d81818;text-align:center;line-height:12.9px;white-space:nowrap">wx</div>
<div style="position:absolute;left:1278.8px;top:818.2px;width:35.8px;height:14.9px;border-radius:3px;background:linear-gradient(#4a4c50 0%,#2a2c30 45%,#121316 55%,#1c1e22 100%);border:1px solid #5a5c62;font-size:9.5px;color:#ffffff;text-align:center;line-height:12.9px;white-space:nowrap">Freq</div>
<div style="position:absolute;left:1278.8px;top:837.2px;width:35.8px;height:14.7px;border-radius:3px;background:linear-gradient(#4a4c50 0%,#2a2c30 45%,#121316 55%,#1c1e22 100%);border:1px solid #5a5c62;font-size:9.5px;color:#d81818;text-align:center;line-height:12.7px;white-space:nowrap">ils</div>
<div style="position:absolute;left:1278.8px;top:856.4px;width:35.8px;height:14.4px;border-radius:3px;background:linear-gradient(#4a4c50 0%,#2a2c30 45%,#121316 55%,#1c1e22 100%);border:1px solid #5a5c62;font-size:9.5px;color:#d81818;text-align:center;line-height:12.4px;white-space:nowrap">Rwy</div>
<div style="position:absolute;left:1278.8px;top:876.1px;width:35.8px;height:18.9px;border-radius:3px;background:linear-gradient(#4a4c50 0%,#2a2c30 45%,#121316 55%,#1c1e22 100%);border:1px solid #5a5c62;font-size:10.5px;color:#f00;text-align:center;line-height:16.9px;white-space:nowrap"><svg width="26" height="16" style="margin-top:1px"><path d="M3,8 L23,8 Q25,8 23,9.5 L14,9.5 L9,15 L7,15 L10,9.5 L5,9.5 L3,12 L2,12 L3,8Z M14,8 L9,1.5 L7,1.5 L10,8Z" fill="#f01818" stroke="#f01818" stroke-width="1"/></svg></div>
<svg style="position:absolute;left:1236px;top:744px" width="34" height="24"><defs><radialGradient id="gsph" cx="0.4" cy="0.35" r="0.7"><stop offset="0" stop-color="#ffffff"/><stop offset="0.6" stop-color="#b8b8b8"/><stop offset="1" stop-color="#404040"/></radialGradient></defs><rect x="8" y="1" width="26" height="22" fill="#181818" opacity="0.8"/><circle cx="23" cy="12" r="9" fill="url(#gsph)"/><path d="M19,6 Q22,9 20,13 Q23,16 21,20 M26,5 Q29,9 27,12" stroke="#505050" stroke-width="1.6" fill="none"/><path d="M3,17 L17,6 M8,9 L13,14 M11,5 L8,11 M4,13 L6,17" stroke="#f4f4f4" stroke-width="2.2" stroke-linecap="round"/></svg>
<div style="position:absolute;left:1095px;top:755.5px;font-size:11px;line-height:14px;color:#3584c8;white-space:nowrap">Alt:</div>
<div style="position:absolute;left:1128.8px;top:755.5px;font-size:11px;line-height:14px;color:#3584c8;white-space:nowrap">06004</div>
<div style="position:absolute;left:1172.9px;top:755.5px;font-size:11px;line-height:14px;color:#3584c8;white-space:nowrap">AGL:</div>
<div style="position:absolute;left:1201px;top:755.5px;font-size:11px;line-height:14px;color:#3584c8;white-space:nowrap">05448</div>
<div style="position:absolute;left:1095px;top:771.0px;font-size:11px;line-height:14px;color:#3584c8;white-space:nowrap">IAS:</div>
<div style="position:absolute;left:1124.7px;top:771.0px;font-size:11px;line-height:14px;color:#3584c8;white-space:nowrap">243</div>
<div style="position:absolute;left:1172.6px;top:771.0px;font-size:11px;line-height:14px;color:#3584c8;white-space:nowrap">GS:</div>
<div style="position:absolute;left:1202.6px;top:771.0px;font-size:11px;line-height:14px;color:#3584c8;white-space:nowrap">264</div>
<div style="position:absolute;left:1095.6px;top:785.8px;font-size:11px;line-height:14px;color:#3584c8;white-space:nowrap">Hdg:</div>
<div style="position:absolute;left:1127.7px;top:785.8px;font-size:11px;line-height:14px;color:#3584c8;white-space:nowrap">185,0°</div>
<div style="position:absolute;left:1174px;top:785.8px;font-size:11px;line-height:14px;color:#3584c8;white-space:nowrap">Trk:</div>
<div style="position:absolute;left:1201.7px;top:785.8px;font-size:11px;line-height:14px;color:#3584c8;white-space:nowrap">181,5°</div>
<div style="position:absolute;left:1096px;top:801.0px;font-size:11px;line-height:14px;color:#3584c8;white-space:nowrap">True:</div>
<div style="position:absolute;left:1126px;top:801.0px;font-size:11px;line-height:14px;color:#3584c8;white-space:nowrap">187,6°</div>
<div style="position:absolute;left:1172.6px;top:801.0px;font-size:11px;line-height:14px;color:#3584c8;white-space:nowrap">WCA:</div>
<div style="position:absolute;left:1203px;top:801.0px;font-size:11px;line-height:14px;color:#3584c8;white-space:nowrap">03,5°</div>
<div style="position:absolute;left:1096px;top:815.3px;font-size:11px;line-height:14px;color:#3584c8;white-space:nowrap">MgVr:</div>
<div style="position:absolute;left:1129.2px;top:815.3px;font-size:11px;line-height:14px;color:#3584c8;white-space:nowrap">02,7°</div>
<div style="position:absolute;left:1095.6px;top:835.1px;font-size:11px;line-height:14px;color:#3584c8;white-space:nowrap">N51°39'14''</div>
<div style="position:absolute;left:1174px;top:835.1px;font-size:11px;line-height:14px;color:#3584c8;white-space:nowrap">E020°24'00''</div>
</body></html>
